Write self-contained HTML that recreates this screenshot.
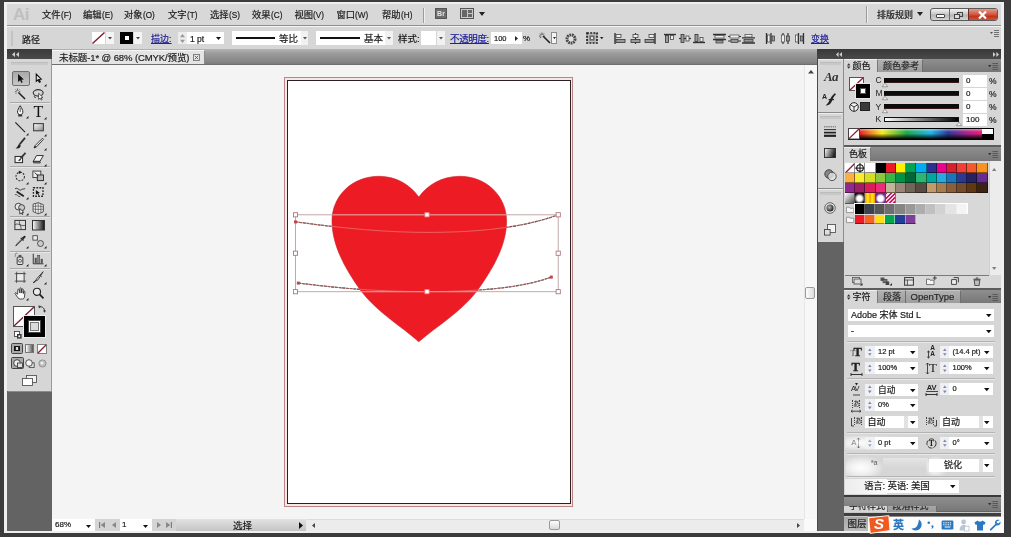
<!DOCTYPE html>
<html lang="zh-CN">
<head>
<meta charset="utf-8">
<title>未标题-1* @ 68% (CMYK/预览)</title>
<style>
*{box-sizing:border-box;margin:0;padding:0}
html,body{width:1011px;height:537px;overflow:hidden;background:#3c3c3c}
body{position:relative;font-family:"Liberation Sans","Noto Sans CJK SC",sans-serif;font-size:10px;color:#1a1a1a;line-height:1}
#root{position:absolute;left:0;top:0;width:1011px;height:537px;will-change:transform}
.a{position:absolute}
.t{white-space:nowrap;line-height:12px;height:12px;-webkit-text-stroke:0.2px}
.blue{color:#22229a;text-decoration:underline}
.wf{background:#fff}
svg{display:block;overflow:visible}
</style>
</head>
<body>
<div id="root">
<div class="a " style="left:4px;top:2px;width:1000px;height:530.6px;background:#efefef"></div>
<div class="a " style="left:7px;top:4px;width:994px;height:527px;background:#d6d6d6"></div>
<div class="a " style="left:7px;top:4px;width:994px;height:22px;background:#d8d8d8"></div>
<div class="a " style="left:7px;top:25px;width:994px;height:1px;background:#8f8f8f"></div>
<div class="a " style="left:7px;top:26px;width:994px;height:1px;background:#f4f4f4"></div>
<div class="a t " style="left:13px;top:5.5px;font-size:17px;font-weight:bold;color:#c0c0c0;line-height:18px;height:18px;letter-spacing:-0.5px">Ai</div>
<div class="a t " style="left:42px;top:9.3px;font-size:9.3px;color:#202020">文件<span style="display:inline-block;transform:scaleX(.88);transform-origin:0 50%">(F)</span></div>
<div class="a t " style="left:83px;top:9.3px;font-size:9.3px;color:#202020">编辑<span style="display:inline-block;transform:scaleX(.88);transform-origin:0 50%">(E)</span></div>
<div class="a t " style="left:124px;top:9.3px;font-size:9.3px;color:#202020">对象<span style="display:inline-block;transform:scaleX(.88);transform-origin:0 50%">(O)</span></div>
<div class="a t " style="left:168px;top:9.3px;font-size:9.3px;color:#202020">文字<span style="display:inline-block;transform:scaleX(.88);transform-origin:0 50%">(T)</span></div>
<div class="a t " style="left:210px;top:9.3px;font-size:9.3px;color:#202020">选择<span style="display:inline-block;transform:scaleX(.88);transform-origin:0 50%">(S)</span></div>
<div class="a t " style="left:252px;top:9.3px;font-size:9.3px;color:#202020">效果<span style="display:inline-block;transform:scaleX(.88);transform-origin:0 50%">(C)</span></div>
<div class="a t " style="left:294.5px;top:9.3px;font-size:9.3px;color:#202020">视图<span style="display:inline-block;transform:scaleX(.88);transform-origin:0 50%">(V)</span></div>
<div class="a t " style="left:336.5px;top:9.3px;font-size:9.3px;color:#202020">窗口<span style="display:inline-block;transform:scaleX(.88);transform-origin:0 50%">(W)</span></div>
<div class="a t " style="left:382px;top:9.3px;font-size:9.3px;color:#202020">帮助<span style="display:inline-block;transform:scaleX(.88);transform-origin:0 50%">(H)</span></div>
<div class="a " style="left:423px;top:8px;width:1px;height:15px;background:#9c9c9c"></div>
<div class="a " style="left:424px;top:8px;width:1px;height:15px;background:#efefef"></div>
<div class="a " style="left:435px;top:8px;width:12px;height:11px;background:#6e6e6e;border:1px solid #555;color:#e4e4e4;font-size:7px;font-weight:bold;line-height:9px;text-align:center">Br</div>
<svg class="a" style="left:460px;top:8px;" width="14" height="11" viewBox="0 0 14 11"><rect x="0.5" y="0.5" width="13" height="10" fill="#c9c9c9" stroke="#555"/><rect x="2" y="2" width="5" height="7" fill="#666"/><rect x="8" y="2" width="4" height="3" fill="#666"/><rect x="8" y="6" width="4" height="3" fill="#666"/></svg>
<svg class="a" style="left:479px;top:12px;" width="6" height="4" viewBox="0 0 6 4"><path d="M0 0H6L3.0 4Z" fill="#222"/></svg>
<div class="a " style="left:866px;top:6px;width:1px;height:17px;background:#9c9c9c"></div>
<div class="a " style="left:867px;top:6px;width:1px;height:17px;background:#efefef"></div>
<div class="a t " style="left:877px;top:9px;font-size:9px;color:#202020">排版规则</div>
<svg class="a" style="left:917px;top:12px;" width="6" height="4" viewBox="0 0 6 4"><path d="M0 0H6L3.0 4Z" fill="#222"/></svg>
<div class="a" style="left:930px;top:8px;width:68px;height:13px;border:1px solid #5a5a5a;border-radius:3px;background:linear-gradient(#f3f3f3,#c9c9c9 45%,#b5b5b5 55%,#d6d6d6);overflow:hidden">
<div class="a" style="left:18px;top:0;width:1px;height:13px;background:#6b6b6b"></div>
<div class="a" style="left:37px;top:0;width:30px;height:13px;background:linear-gradient(#e39a8a,#d2513a 45%,#c0321c 55%,#d7654f);border-left:1px solid #6b2a20"></div>
<div class="a" style="left:4.5px;top:5px;width:9px;height:4px;border:1px solid #444;background:#fff;border-radius:1px"></div>
<div class="a" style="left:26px;top:3px;width:6px;height:5px;border:1px solid #444"></div>
<div class="a" style="left:23px;top:5px;width:6px;height:5px;border:1px solid #444;background:#ddd"></div>
<svg class="a" style="left:47px;top:2px" width="9" height="8" viewBox="0 0 9 8"><path d="M1 0.5L8 7.5M8 0.5L1 7.5" stroke="#fff" stroke-width="2.2"/></svg>
</div>
<div class="a " style="left:11px;top:31px;width:2px;height:15px;background:#c3c3c3"></div>
<div class="a t " style="left:22px;top:33.5px;font-size:9px">路径</div>
<svg class="a" style="left:92px;top:32px;" width="13" height="12" viewBox="0 0 13 12"><rect width="13" height="12" fill="#fff"/><path d="M0.5 11.5L12.5 0.5" stroke="#7a1c2c" stroke-width="1.4"/></svg>
<div class="a " style="left:106px;top:32px;width:8px;height:12px;background:#f4f4f4"></div>
<svg class="a" style="left:108px;top:37px;" width="4" height="2.5" viewBox="0 0 4 2.5"><path d="M0 0H4L2.0 2.5Z" fill="#444"/></svg>
<div class="a " style="left:120px;top:32px;width:13px;height:12px;background:#000"></div>
<div class="a " style="left:125px;top:36px;width:4px;height:4px;background:#fff"></div>
<div class="a " style="left:134px;top:32px;width:8px;height:12px;background:#f4f4f4"></div>
<svg class="a" style="left:136px;top:37px;" width="4" height="2.5" viewBox="0 0 4 2.5"><path d="M0 0H4L2.0 2.5Z" fill="#444"/></svg>
<div class="a t blue" style="left:151px;top:33.3px;font-size:9px">描边:</div>
<div class="a " style="left:178px;top:32px;width:46px;height:12px;background:#fff"></div>
<div class="a " style="left:178px;top:32px;width:9px;height:12px;background:#ececec"></div>
<svg class="a" style="left:180px;top:33.5px;" width="5" height="9" viewBox="0 0 5 9"><path d="M0 3.2L2.5 0L5 3.2Z M0 5.8L2.5 9L5 5.8Z" fill="#999"/></svg>
<div class="a t " style="left:190px;top:33px;font-size:8.5px">1 pt</div>
<svg class="a" style="left:216px;top:37px;" width="5" height="3" viewBox="0 0 5 3"><path d="M0 0H5L2.5 3Z" fill="#111"/></svg>
<div class="a " style="left:232px;top:31px;width:69px;height:14px;background:#fff"></div>
<div class="a " style="left:236px;top:37px;width:39px;height:2px;background:#111"></div>
<div class="a t " style="left:279px;top:33px;font-size:9.5px">等比</div>
<div class="a " style="left:301px;top:31px;width:7px;height:14px;background:#f1f1f1"></div>
<svg class="a" style="left:302.5px;top:37px;" width="4" height="2.5" viewBox="0 0 4 2.5"><path d="M0 0H4L2.0 2.5Z" fill="#555"/></svg>
<div class="a " style="left:316px;top:31px;width:69px;height:14px;background:#fff"></div>
<div class="a " style="left:320px;top:37px;width:40px;height:2px;background:#111"></div>
<div class="a t " style="left:364px;top:33px;font-size:9.5px">基本</div>
<div class="a " style="left:385px;top:31px;width:8px;height:14px;background:#f1f1f1"></div>
<svg class="a" style="left:387px;top:37px;" width="4" height="2.5" viewBox="0 0 4 2.5"><path d="M0 0H4L2.0 2.5Z" fill="#555"/></svg>
<div class="a t " style="left:398px;top:33px;font-size:9.5px">样式:</div>
<div class="a " style="left:421px;top:31px;width:15px;height:14px;background:#fff"></div>
<div class="a " style="left:437px;top:31px;width:8px;height:14px;background:#f1f1f1"></div>
<svg class="a" style="left:439px;top:37px;" width="4" height="2.5" viewBox="0 0 4 2.5"><path d="M0 0H4L2.0 2.5Z" fill="#555"/></svg>
<div class="a t blue" style="left:450px;top:33px;font-size:9.5px;letter-spacing:-0.35px">不透明度:</div>
<div class="a " style="left:491px;top:32px;width:31px;height:12px;background:#fff"></div>
<div class="a t " style="left:494px;top:33px;font-size:7.5px">100</div>
<svg class="a" style="left:515px;top:35.5px;" width="3" height="5" viewBox="0 0 3 5"><path d="M0 0L3 2.5L0 5Z" fill="#222"/></svg>
<div class="a t " style="left:523px;top:33px;font-size:8px">%</div>
<svg class="a" style="left:538px;top:32px;" width="13" height="12" viewBox="0 0 13 12"><path d="M5 4L12 11" stroke="#222" stroke-width="1.6"/><path d="M4 0.5V3M1 4H3.2M5.8 4H7M2 1.5L3.2 2.8M6 1.5L5 2.8M2 6.2L3.2 5" stroke="#444" stroke-width="0.9"/></svg>
<div class="a " style="left:551px;top:32px;width:6px;height:12px;background:#f4f4f4;border:1px solid #8c8c8c"></div>
<svg class="a" style="left:552.5px;top:37px;" width="3" height="2" viewBox="0 0 3 2"><path d="M0 0H3L1.5 2Z" fill="#222"/></svg>
<svg class="a" style="left:565px;top:33px;" width="12" height="12" viewBox="0 0 12 12"><circle cx="6" cy="6" r="4" fill="none" stroke="#4a4a4a" stroke-width="3" stroke-dasharray="1.7 0.7"/><circle cx="6" cy="6" r="2.4" fill="#e0e0e0"/></svg>
<svg class="a" style="left:586px;top:32px;" width="12" height="12" viewBox="0 0 12 12"><rect x="1" y="1" width="10" height="10" fill="#b9b9b9" stroke="#222" stroke-width="1.7" stroke-dasharray="2 1.2"/><rect x="3.4" y="3.4" width="5.2" height="5.2" fill="#6a6a6a"/><rect x="5" y="5" width="2" height="2" fill="#e6e6e6"/></svg>
<svg class="a" style="left:599.5px;top:37px;" width="3.5" height="2.2" viewBox="0 0 3.5 2.2"><path d="M0 0H3.5L1.75 2.2Z" fill="#222"/></svg>
<svg class="a" style="left:614px;top:33px;" width="13" height="11" viewBox="0 0 13 11"><path d="M1 0V11" stroke="#333" stroke-width="1.4"/><rect x="2" y="1.5" width="5" height="3" fill="#efefef" stroke="#444" stroke-width="0.8"/><rect x="2" y="6.5" width="9" height="3" fill="#999" stroke="#333" stroke-width="0.8"/></svg>
<svg class="a" style="left:629.5px;top:33px;" width="13" height="11" viewBox="0 0 13 11"><path d="M5.5 0V11" stroke="#333" stroke-width="1.2"/><rect x="3" y="1.5" width="5" height="3" fill="#efefef" stroke="#444" stroke-width="0.8"/><rect x="1" y="6.5" width="9" height="3" fill="#999" stroke="#333" stroke-width="0.8"/></svg>
<svg class="a" style="left:644px;top:33px;" width="13" height="11" viewBox="0 0 13 11"><path d="M11 0V11" stroke="#333" stroke-width="1.4"/><rect x="5" y="1.5" width="5" height="3" fill="#efefef" stroke="#444" stroke-width="0.8"/><rect x="1" y="6.5" width="9" height="3" fill="#999" stroke="#333" stroke-width="0.8"/></svg>
<svg class="a" style="left:664px;top:33px;" width="13" height="11" viewBox="0 0 13 11"><path d="M0 1.5H12" stroke="#333" stroke-width="1.4"/><rect x="1.5" y="2.5" width="3" height="7" fill="#999" stroke="#333" stroke-width="0.8"/><rect x="6.5" y="2.5" width="3" height="4" fill="#efefef" stroke="#444" stroke-width="0.8"/></svg>
<svg class="a" style="left:679px;top:33px;" width="13" height="11" viewBox="0 0 13 11"><path d="M0 5.5H12" stroke="#333" stroke-width="1.2"/><rect x="2" y="1.5" width="3" height="8" fill="#999" stroke="#333" stroke-width="0.8"/><rect x="7" y="3" width="3" height="5" fill="#efefef" stroke="#444" stroke-width="0.8"/></svg>
<svg class="a" style="left:693px;top:33px;" width="13" height="11" viewBox="0 0 13 11"><path d="M0 9.5H12" stroke="#333" stroke-width="1.4"/><rect x="2" y="1.5" width="3" height="7" fill="#999" stroke="#333" stroke-width="0.8"/><rect x="7" y="4.5" width="3" height="4" fill="#efefef" stroke="#444" stroke-width="0.8"/></svg>
<svg class="a" style="left:713px;top:33px;" width="13" height="11" viewBox="0 0 13 11"><path d="M0 1.5H13M0 6.5H13" stroke="#333" stroke-width="1.3"/><rect x="2" y="2.5" width="9" height="2.5" fill="#efefef" stroke="#444" stroke-width="0.7"/><rect x="3" y="7.5" width="7" height="2.5" fill="#999" stroke="#333" stroke-width="0.7"/></svg>
<svg class="a" style="left:728px;top:33px;" width="13" height="11" viewBox="0 0 13 11"><path d="M0 3.5H13M0 8H13" stroke="#333" stroke-width="1.2"/><rect x="2" y="2" width="9" height="3" fill="#efefef" stroke="#444" stroke-width="0.7"/><rect x="3" y="6.5" width="7" height="3" fill="#999" stroke="#333" stroke-width="0.7"/></svg>
<svg class="a" style="left:742px;top:33px;" width="13" height="11" viewBox="0 0 13 11"><path d="M0 4.8H13M0 10H13" stroke="#333" stroke-width="1.3"/><rect x="3" y="1.5" width="7" height="2.5" fill="#efefef" stroke="#444" stroke-width="0.7"/><rect x="2" y="6.5" width="9" height="2.5" fill="#999" stroke="#333" stroke-width="0.7"/></svg>
<svg class="a" style="left:764.5px;top:33px;" width="13" height="11" viewBox="0 0 13 11"><path d="M1.5 0V11M6 0V11" stroke="#333" stroke-width="1.3"/><rect x="2.5" y="2" width="2.5" height="7" fill="#efefef" stroke="#444" stroke-width="0.7"/><rect x="7" y="3" width="2.5" height="5" fill="#999" stroke="#333" stroke-width="0.7"/></svg>
<svg class="a" style="left:779.5px;top:33px;" width="13" height="11" viewBox="0 0 13 11"><path d="M3 0V11M8 0V11" stroke="#333" stroke-width="1.2"/><rect x="1.5" y="2" width="3" height="7" fill="#efefef" stroke="#444" stroke-width="0.7"/><rect x="6.5" y="3" width="3" height="5" fill="#999" stroke="#333" stroke-width="0.7"/></svg>
<svg class="a" style="left:794px;top:33px;" width="13" height="11" viewBox="0 0 13 11"><path d="M4.5 0V11M9.5 0V11" stroke="#333" stroke-width="1.3"/><rect x="1.5" y="2" width="2.5" height="7" fill="#efefef" stroke="#444" stroke-width="0.7"/><rect x="6.5" y="3" width="2.5" height="5" fill="#999" stroke="#333" stroke-width="0.7"/></svg>
<div class="a t blue" style="left:811px;top:33px;font-size:9px">变换</div>
<svg class="a" style="left:990px;top:30px;" width="9" height="7" viewBox="0 0 9 7"><path d="M0 2H3L1.5 4Z" fill="#555"/><path d="M4 0.5H9M4 2.5H9M4 4.5H9M4 6.5H9" stroke="#666" stroke-width="0.9"/></svg>
<div class="a " style="left:52px;top:49px;width:765px;height:16px;background:linear-gradient(#b4b4b4,#9a9a9a 30%,#868686 80%,#777)"></div>
<div class="a " style="left:52px;top:50px;width:153px;height:15px;background:#e4e4e4;border-right:1px solid #8a8a8a;border-top:1px solid #f6f6f6"></div>
<div class="a t " style="left:59px;top:52px;font-size:9.5px;color:#222;letter-spacing:-0.1px">未标题-1* @ 68% (CMYK/预览)</div>
<svg class="a" style="left:193px;top:54px;" width="7" height="7" viewBox="0 0 7 7"><rect x="0.5" y="0.5" width="6" height="6" fill="#e9e9e9" stroke="#777" stroke-width="0.9"/><path d="M1.8 1.8L5.2 5.2M5.2 1.8L1.8 5.2" stroke="#555" stroke-width="0.9"/></svg>
<div class="a " style="left:7px;top:49px;width:45px;height:10px;background:linear-gradient(#3a3a3a,#4a4a4a)"></div>
<svg class="a" style="left:12px;top:52px;" width="7" height="5" viewBox="0 0 7 5"><path d="M3 0L0 2.5L3 5ZM7 0L4 2.5L7 5Z" fill="#cfcfcf"/></svg>
<div class="a " style="left:8px;top:59px;width:43px;height:332px;background:#d6d6d6"></div>
<div class="a " style="left:51px;top:59px;width:1px;height:332px;background:#9a9a9a"></div>
<div class="a " style="left:11px;top:62px;width:37px;height:3px;background:#c9c9c9;border-top:1px solid #bdbdbd"></div>
<div class="a " style="left:7px;top:391px;width:45px;height:140px;background:#636363"></div>
<div class="a " style="left:8px;top:391px;width:44px;height:1px;background:#8a8a8a"></div>
<div class="a " style="left:10px;top:102px;width:40px;height:1px;background:#a9a9a9"></div>
<div class="a " style="left:10px;top:103px;width:40px;height:1px;background:#e6e6e6"></div>
<div class="a " style="left:10px;top:165.5px;width:40px;height:1px;background:#a9a9a9"></div>
<div class="a " style="left:10px;top:166.5px;width:40px;height:1px;background:#e6e6e6"></div>
<div class="a " style="left:10px;top:215.5px;width:40px;height:1px;background:#a9a9a9"></div>
<div class="a " style="left:10px;top:216.5px;width:40px;height:1px;background:#e6e6e6"></div>
<div class="a " style="left:10px;top:250.5px;width:40px;height:1px;background:#a9a9a9"></div>
<div class="a " style="left:10px;top:251.5px;width:40px;height:1px;background:#e6e6e6"></div>
<div class="a " style="left:10px;top:268px;width:40px;height:1px;background:#a9a9a9"></div>
<div class="a " style="left:10px;top:269px;width:40px;height:1px;background:#e6e6e6"></div>
<div class="a " style="left:11.5px;top:71px;width:18px;height:15px;background:linear-gradient(#a9a9a9,#c6c6c6);border:1px solid #6f6f6f;border-radius:2px"></div>
<svg class="a" style="left:14.3px;top:72.3px;" width="12.4" height="12.4" viewBox="0 0 14 14"><path d="M4.6 2.2L4.6 11.4L6.9 9.3L8.4 12.3L9.8 11.6L8.3 8.8L11.1 8.6Z" fill="#111"/></svg>
<svg class="a" style="left:32.3px;top:72.3px;" width="12.4" height="12.4" viewBox="0 0 14 14"><path d="M4.8 2.4L4.8 10.6L6.8 8.8L8.2 11.6L9.4 11L8 8.3L10.4 8.1Z" fill="#e8e8e8" stroke="#111" stroke-width="1.2"/></svg>
<svg class="a" style="left:44.1px;top:83.9px;" width="2.5" height="2.5" viewBox="0 0 2.5 2.5"><path d="M2.5 0V2.5H0Z" fill="#222"/></svg>
<svg class="a" style="left:14.3px;top:88.3px;" width="12.4" height="12.4" viewBox="0 0 14 14"><path d="M5 5L12.5 12.5" stroke="#222" stroke-width="1.7"/><path d="M4 0.5V3M1 4.2H3M5.5 4.2H7.2M1.8 1.8L3 3M6.2 1.8L5.2 3M2 6.5L3 5.4" stroke="#444" stroke-width="0.9"/></svg>
<svg class="a" style="left:32.3px;top:88.3px;" width="12.4" height="12.4" viewBox="0 0 14 14"><ellipse cx="7" cy="5.5" rx="5.6" ry="3.6" fill="none" stroke="#333" stroke-width="1.3"/><path d="M3 8.5C2 10 3 11.5 4.5 10.5" fill="none" stroke="#333" stroke-width="1"/><path d="M7.5 6L7.5 13L9.2 11.4L10.4 13.6L11.4 13L10.3 11L12.4 10.8Z" fill="#fff" stroke="#222" stroke-width="0.8"/></svg>
<svg class="a" style="left:14.3px;top:104.8px;" width="12.4" height="12.4" viewBox="0 0 14 14"><path d="M7 0.8C5.4 3.5 4 5.5 4 8.2L5.4 11H8.6L10 8.2C10 5.5 8.6 3.5 7 0.8Z" fill="#fff" stroke="#222" stroke-width="1.1"/><path d="M7 3V8" stroke="#222" stroke-width="0.9"/><rect x="4.8" y="11.2" width="4.4" height="1.8" fill="#333"/></svg>
<svg class="a" style="left:26.1px;top:116.4px;" width="2.5" height="2.5" viewBox="0 0 2.5 2.5"><path d="M2.5 0V2.5H0Z" fill="#222"/></svg>
<div class="a" style="left:30.5px;top:103.5px;width:16px;height:16px;font-family:'Liberation Serif',serif;font-size:16px;line-height:16px;text-align:center;color:#111">T</div>
<svg class="a" style="left:44px;top:117px;" width="2.5" height="2.5" viewBox="0 0 2.5 2.5"><path d="M2.5 0V2.5H0Z" fill="#222"/></svg>
<svg class="a" style="left:14.3px;top:121.3px;" width="12.4" height="12.4" viewBox="0 0 14 14"><path d="M1.5 1.5L12.5 12.5" stroke="#222" stroke-width="1.3"/></svg>
<svg class="a" style="left:26.1px;top:132.9px;" width="2.5" height="2.5" viewBox="0 0 2.5 2.5"><path d="M2.5 0V2.5H0Z" fill="#222"/></svg>
<svg class="a" style="left:33px;top:123.2px;" width="11" height="8.4" viewBox="0 0 11 8.4"><defs><linearGradient id="rg" x1="0" y1="0" x2="1" y2="1"><stop offset="0" stop-color="#fff"/><stop offset="1" stop-color="#8a8a8a"/></linearGradient></defs><rect x="0.6" y="0.6" width="9.8" height="7.2" fill="url(#rg)" stroke="#444" stroke-width="1.1"/></svg>
<svg class="a" style="left:44px;top:133.5px;" width="2.5" height="2.5" viewBox="0 0 2.5 2.5"><path d="M2.5 0V2.5H0Z" fill="#222"/></svg>
<svg class="a" style="left:14.3px;top:136.8px;" width="12.4" height="12.4" viewBox="0 0 14 14"><path d="M12.5 1L6.5 8" stroke="#333" stroke-width="2"/><path d="M6.5 8C5 8.2 4.6 9.8 3.6 11.2C2.9 12.2 1.8 12.6 1.5 12.6C3.6 13.4 6 12.8 6.9 11.6C7.7 10.5 7.6 9 6.5 8Z" fill="#222"/></svg>
<svg class="a" style="left:32.3px;top:136.8px;" width="12.4" height="12.4" viewBox="0 0 14 14"><path d="M11.8 1.4L13 2.6L5 11.2L2.4 12.4L3.4 9.8Z" fill="#eee" stroke="#222" stroke-width="1"/><path d="M2.4 12.4L3.4 9.8L5 11.2Z" fill="#222"/></svg>
<svg class="a" style="left:44.1px;top:148.4px;" width="2.5" height="2.5" viewBox="0 0 2.5 2.5"><path d="M2.5 0V2.5H0Z" fill="#222"/></svg>
<svg class="a" style="left:14.3px;top:152.3px;" width="12.4" height="12.4" viewBox="0 0 14 14"><rect x="1.2" y="5" width="8.5" height="7" fill="#f2f2f2" stroke="#222" stroke-width="1.1"/><path d="M13 1L7.4 7.2" stroke="#333" stroke-width="1.9"/><path d="M7.5 7C6 7.3 6 8.8 4.6 10C6.4 10.6 8.6 9.3 7.5 7Z" fill="#222"/></svg>
<svg class="a" style="left:32.3px;top:152.3px;" width="12.4" height="12.4" viewBox="0 0 14 14"><path d="M5.2 4L12.8 4L9 10.6H1.4Z" fill="#f4f4f4" stroke="#222" stroke-width="1"/><path d="M1.4 10.6H9L9.4 12.4H1.8Z" fill="#888" stroke="#222" stroke-width="0.8"/></svg>
<svg class="a" style="left:44.1px;top:163.9px;" width="2.5" height="2.5" viewBox="0 0 2.5 2.5"><path d="M2.5 0V2.5H0Z" fill="#222"/></svg>
<svg class="a" style="left:14.3px;top:170.3px;" width="12.4" height="12.4" viewBox="0 0 14 14"><circle cx="7" cy="7.4" r="4.8" fill="none" stroke="#333" stroke-width="1.2" stroke-dasharray="2.2 1.4"/><path d="M5.5 0.6L9 2.5L5.6 4.6Z" fill="#222"/></svg>
<svg class="a" style="left:26.1px;top:181.9px;" width="2.5" height="2.5" viewBox="0 0 2.5 2.5"><path d="M2.5 0V2.5H0Z" fill="#222"/></svg>
<svg class="a" style="left:32.3px;top:170.3px;" width="12.4" height="12.4" viewBox="0 0 14 14"><rect x="1" y="1.2" width="9" height="7.4" fill="#eee" stroke="#333" stroke-width="1"/><rect x="6" y="5.6" width="7" height="6.4" fill="#bbb" stroke="#222" stroke-width="1"/><path d="M3 3L7 6.6" stroke="#222" stroke-width="1"/></svg>
<svg class="a" style="left:44.1px;top:181.9px;" width="2.5" height="2.5" viewBox="0 0 2.5 2.5"><path d="M2.5 0V2.5H0Z" fill="#222"/></svg>
<svg class="a" style="left:14.3px;top:185.8px;" width="12.4" height="12.4" viewBox="0 0 14 14"><path d="M1.2 3.2C4 0.8 6 6.2 8.4 4.2C10 2.8 11 4 12.6 2.8" fill="none" stroke="#333" stroke-width="1.1"/><path d="M3 6.2L11 11.6" stroke="#222" stroke-width="2"/><path d="M1 9.8C3.4 8.6 4.4 12.6 7 12" fill="none" stroke="#444" stroke-width="1"/></svg>
<svg class="a" style="left:26.1px;top:197.4px;" width="2.5" height="2.5" viewBox="0 0 2.5 2.5"><path d="M2.5 0V2.5H0Z" fill="#222"/></svg>
<svg class="a" style="left:32.3px;top:185.8px;" width="12.4" height="12.4" viewBox="0 0 14 14"><rect x="1.6" y="2" width="10.8" height="9.6" fill="none" stroke="#222" stroke-width="1.5" stroke-dasharray="2 1.4"/><path d="M4.4 4.4L4.4 10L6 8.6L7 10.8L8 10.3L7 8.2L9 8Z" fill="#111"/></svg>
<svg class="a" style="left:14.3px;top:201.8px;" width="12.4" height="12.4" viewBox="0 0 14 14"><circle cx="5" cy="5.2" r="3.8" fill="#e9e9e9" stroke="#333" stroke-width="1"/><circle cx="8.6" cy="6.4" r="3.4" fill="#c9c9c9" stroke="#333" stroke-width="1"/><path d="M6.5 7.4L6.5 13.6L8.1 12.2L9.2 14.2L10.1 13.7L9.1 11.8L11 11.6Z" fill="#fff" stroke="#111" stroke-width="0.8"/></svg>
<svg class="a" style="left:26.1px;top:213.4px;" width="2.5" height="2.5" viewBox="0 0 2.5 2.5"><path d="M2.5 0V2.5H0Z" fill="#222"/></svg>
<svg class="a" style="left:32.3px;top:201.8px;" width="12.4" height="12.4" viewBox="0 0 14 14"><path d="M1.2 2.4L7 0.8L12.8 3V11L7 13.4L1.2 10.8Z" fill="#ededed" stroke="#333" stroke-width="0.9"/><path d="M7 0.8V13.4M1.2 5.2L7 4.4L12.8 5.6M1.2 8L7 8.4L12.8 8.2M4 1.7V12.1M10 1.9V12.2" stroke="#444" stroke-width="0.7" fill="none"/></svg>
<svg class="a" style="left:44.1px;top:213.4px;" width="2.5" height="2.5" viewBox="0 0 2.5 2.5"><path d="M2.5 0V2.5H0Z" fill="#222"/></svg>
<svg class="a" style="left:14.3px;top:219.3px;" width="12.4" height="12.4" viewBox="0 0 14 14"><rect x="1" y="1.6" width="12" height="10.4" fill="#dcdcdc" stroke="#333" stroke-width="1.1"/><path d="M1 6.4C5 3.8 9 9.4 13 6.8M6.6 1.6C4.4 5 9.6 8.6 7.4 12" fill="none" stroke="#333" stroke-width="0.9"/></svg>
<svg class="a" style="left:31.5px;top:220px;" width="13" height="10.5" viewBox="0 0 13 10.5"><defs><linearGradient id="gg" x1="0" y1="0" x2="1" y2="0"><stop offset="0" stop-color="#fff"/><stop offset="1" stop-color="#111"/></linearGradient></defs><rect x="0.5" y="0.5" width="12" height="9.5" fill="url(#gg)" stroke="#333" stroke-width="1"/></svg>
<svg class="a" style="left:14.3px;top:234.8px;" width="12.4" height="12.4" viewBox="0 0 14 14"><path d="M11.4 1C12.6 0.4 13.6 1.6 12.8 2.8L10.6 5L8.8 3.2Z" fill="#222"/><path d="M9.2 4L3 10.4L2 12.2L3.6 11.2L10 4.8" fill="#eee" stroke="#222" stroke-width="0.9"/><path d="M7.6 3.2L10.8 6.2" stroke="#222" stroke-width="1.4"/></svg>
<svg class="a" style="left:26.1px;top:246.4px;" width="2.5" height="2.5" viewBox="0 0 2.5 2.5"><path d="M2.5 0V2.5H0Z" fill="#222"/></svg>
<svg class="a" style="left:32.3px;top:234.8px;" width="12.4" height="12.4" viewBox="0 0 14 14"><rect x="1" y="0.8" width="5" height="5" fill="#eee" stroke="#333" stroke-width="0.9"/><circle cx="9.6" cy="9.6" r="3.4" fill="#ccc" stroke="#333" stroke-width="0.9"/><path d="M5.4 5.4L7.4 7.4" stroke="#555" stroke-width="0.8" stroke-dasharray="1 0.8"/></svg>
<svg class="a" style="left:44.1px;top:246.4px;" width="2.5" height="2.5" viewBox="0 0 2.5 2.5"><path d="M2.5 0V2.5H0Z" fill="#222"/></svg>
<svg class="a" style="left:14.3px;top:252.8px;" width="12.4" height="12.4" viewBox="0 0 14 14"><rect x="3.6" y="4.6" width="6.4" height="8.4" rx="1" fill="#e4e4e4" stroke="#222" stroke-width="1"/><rect x="5.2" y="2.2" width="3.2" height="2.4" fill="#555"/><circle cx="6.8" cy="8.8" r="1.7" fill="none" stroke="#333" stroke-width="0.8"/><path d="M1 1.2H2.2M0.8 3.4H2M2.6 0.2H3.6" stroke="#333" stroke-width="0.9"/></svg>
<svg class="a" style="left:26.1px;top:264.4px;" width="2.5" height="2.5" viewBox="0 0 2.5 2.5"><path d="M2.5 0V2.5H0Z" fill="#222"/></svg>
<svg class="a" style="left:32.3px;top:252.8px;" width="12.4" height="12.4" viewBox="0 0 14 14"><path d="M1.4 0.8V12.2H13" fill="none" stroke="#222" stroke-width="1"/><rect x="3" y="5.4" width="2.4" height="6.4" fill="#555"/><rect x="6.4" y="2.6" width="2.4" height="9.2" fill="#888" stroke="#333" stroke-width="0.5"/><rect x="9.8" y="6.6" width="2.4" height="5.2" fill="#555"/></svg>
<svg class="a" style="left:44.1px;top:264.4px;" width="2.5" height="2.5" viewBox="0 0 2.5 2.5"><path d="M2.5 0V2.5H0Z" fill="#222"/></svg>
<svg class="a" style="left:14.3px;top:270.8px;" width="12.4" height="12.4" viewBox="0 0 14 14"><rect x="3" y="3" width="8.4" height="8.4" fill="#ececec" stroke="#333" stroke-width="1"/><path d="M3 0.8V3M0.8 3H3M11.4 11.4V13.6M11.4 11.4H13.6M11.4 0.8V3M13.6 3H11.4M3 13.6V11.4M0.8 11.4H3" stroke="#333" stroke-width="0.8"/></svg>
<svg class="a" style="left:32.3px;top:270.8px;" width="12.4" height="12.4" viewBox="0 0 14 14"><path d="M12.6 0.8L5.4 8.6L3.6 11.6L6.8 10Z" fill="#ddd" stroke="#222" stroke-width="0.9"/><path d="M3.6 11.6L1.4 13.4" stroke="#222" stroke-width="1.2"/><path d="M9 4.8L11 6.6" stroke="#222" stroke-width="0.8"/></svg>
<svg class="a" style="left:44.1px;top:282.4px;" width="2.5" height="2.5" viewBox="0 0 2.5 2.5"><path d="M2.5 0V2.5H0Z" fill="#222"/></svg>
<svg class="a" style="left:14.3px;top:286.8px;" width="12.4" height="12.4" viewBox="0 0 14 14"><path d="M4 8.2L2.2 6.6C1.4 6 0.8 7 1.4 7.8L4.6 12.4C5.2 13.2 6 13.6 7 13.6H9.4C10.8 13.6 11.6 12.6 11.8 11.4L12.4 5.6C12.4 4.6 11.2 4.6 11 5.4L10.6 7.4L10.4 2.8C10.4 1.8 9 1.8 9 2.8L8.8 6.8L8.2 1.6C8.2 0.6 6.8 0.6 6.8 1.6L6.8 6.8L5.8 2.8C5.6 1.8 4.2 2.2 4.4 3.2Z" fill="#fafafa" stroke="#222" stroke-width="0.9"/></svg>
<svg class="a" style="left:26.1px;top:298.4px;" width="2.5" height="2.5" viewBox="0 0 2.5 2.5"><path d="M2.5 0V2.5H0Z" fill="#222"/></svg>
<svg class="a" style="left:32.3px;top:286.8px;" width="12.4" height="12.4" viewBox="0 0 14 14"><circle cx="5.6" cy="5.4" r="4" fill="#ececec" stroke="#222" stroke-width="1.3"/><path d="M8.6 8.4L13 12.8" stroke="#222" stroke-width="2"/></svg>
<svg class="a" style="left:13px;top:306px;" width="22" height="21" viewBox="0 0 22 21"><rect x="0.5" y="0.5" width="21" height="20" fill="#fff" stroke="#555" stroke-width="1"/><path d="M1 20L21 1" stroke="#7a1c2c" stroke-width="1.3"/></svg>
<div class="a " style="left:24px;top:316px;width:21px;height:21px;background:#000;border:1px solid #000;outline:1px solid #ececec"></div>
<div class="a " style="left:28px;top:320px;width:13px;height:13px;background:#fff;border:1px solid #444"></div>
<div class="a " style="left:30px;top:322px;width:9px;height:9px;background:#dcdcdc;border:1px solid #777"></div>
<svg class="a" style="left:38px;top:305px;" width="8" height="8" viewBox="0 0 8 8"><path d="M1 2.4C3.6 0.8 6.2 2.6 6.6 6" fill="none" stroke="#333" stroke-width="1"/><path d="M0.4 0.6L3 1L1 3.4ZM5 5.4H8L6.6 7.8Z" fill="#333"/></svg>
<svg class="a" style="left:14px;top:331px;" width="8" height="8" viewBox="0 0 8 8"><rect x="0.5" y="0.5" width="5" height="5" fill="#fff" stroke="#333" stroke-width="0.8"/><rect x="3" y="3" width="4.6" height="4.6" fill="#333"/><rect x="4.4" y="4.4" width="1.8" height="1.8" fill="#fff"/></svg>
<div class="a " style="left:11px;top:343px;width:12px;height:11px;background:#a9a9a9;border:1px solid #444;border-radius:1.5px"></div>
<div class="a " style="left:14px;top:346px;width:6px;height:5px;background:#333;border:1px solid #111"></div>
<div class="a " style="left:15.6px;top:347.4px;width:2.6px;height:2.2px;background:#ddd"></div>
<div class="a " style="left:25px;top:344px;width:9px;height:9px;background:linear-gradient(90deg,#fff,#555);border:1px solid #777"></div>
<svg class="a" style="left:37px;top:343.5px;" width="10" height="10" viewBox="0 0 10 10"><rect x="0.5" y="0.5" width="9" height="9" fill="#fff" stroke="#777" stroke-width="0.9"/><path d="M1 9L9 1" stroke="#8a1c30" stroke-width="1.3"/></svg>
<div class="a " style="left:11px;top:357px;width:13px;height:12px;background:#a9a9a9;border:1px solid #444;border-radius:1.5px"></div>
<svg class="a" style="left:12.5px;top:358.5px;" width="10" height="9" viewBox="0 0 10 9"><circle cx="4" cy="4" r="3.3" fill="#efefef" stroke="#333" stroke-width="0.9"/><rect x="4.4" y="4" width="5" height="4.4" fill="#ddd" stroke="#333" stroke-width="0.8"/></svg>
<svg class="a" style="left:25px;top:358.5px;" width="10" height="9" viewBox="0 0 10 9"><rect x="4.2" y="3.8" width="5" height="4.6" fill="#ddd" stroke="#444" stroke-width="0.8"/><circle cx="4" cy="4" r="3.3" fill="#f4f4f4" stroke="#444" stroke-width="0.9"/></svg>
<svg class="a" style="left:38px;top:359px;" width="9" height="9" viewBox="0 0 9 9"><circle cx="4.5" cy="4.5" r="3.6" fill="#bdbdbd" stroke="#888" stroke-width="0.8"/><circle cx="4" cy="4" r="1.6" fill="#eee"/></svg>
<svg class="a" style="left:22px;top:375px;" width="15" height="11" viewBox="0 0 15 11"><rect x="4.5" y="0.5" width="10" height="7" fill="#f2f2f2" stroke="#555" stroke-width="0.9"/><rect x="0.5" y="3.5" width="10" height="7" fill="#fff" stroke="#555" stroke-width="0.9"/></svg>
<div class="a " style="left:52px;top:65px;width:752px;height:455px;background:#f4f4f4"></div>
<div class="a " style="left:52px;top:64px;width:765px;height:1px;background:#6f6f6f"></div>
<div class="a " style="left:284px;top:77px;width:289px;height:430px;background:#f6e6e6;border:1px solid #bb8585"></div>
<div class="a " style="left:287px;top:80px;width:283.5px;height:424px;background:#fff;border:1px solid #2e2020"></div>
<svg class="a" style="left:0;top:0" width="1011" height="537" viewBox="0 0 1011 537">
<path id="c1" d="M295.5 221.8C340 228 385 232.4 427 232.4C470 232.4 520 229 558.2 214.8" fill="none" stroke="#2a1a1a" stroke-width="1.15" stroke-dasharray="3 0.7"/>
<path id="c2" d="M298.2 283C330 287 370 291.6 427 291.6C470 291.6 520 289 551.3 277" fill="none" stroke="#2a1a1a" stroke-width="1.15" stroke-dasharray="3 0.7"/>
<path d="M418.8 197C410 184.5 396 176.3 379 176.3C352 176.3 332 196 332 221C332 246 346 270 361 291C378 313 400 325 418.8 341.8C438 325 460 313 477 291C492 270 506.6 246 506.6 221C506.6 196 486 176.3 460 176.3C442 176.3 428 184.5 418.8 197Z" fill="#ed1c24" stroke="#c8202a" stroke-width="0.6"/>
<g fill="none" stroke="#e58f8f" stroke-width="0.8" opacity="0.75">
<path d="M295.5 221.8C340 228 385 232.4 427 232.4C470 232.4 520 229 558.2 214.8"/>
<path d="M298.2 283C330 287 370 291.6 427 291.6C470 291.6 520 289 551.3 277"/>
</g>
<rect x="295.5" y="214.8" width="262.7" height="76.9" fill="none" stroke="#bba0a0" stroke-width="0.9"/>
<path d="M333 214.8H506M361 291.7H477" stroke="#f58a8a" stroke-width="0.9"/>
<g fill="#fff" stroke="#a86a6a" stroke-width="0.8">
<rect x="293.4" y="212.7" width="4.2" height="4.2"/><rect x="556.1" y="212.7" width="4.2" height="4.2"/>
<rect x="293.4" y="251.1" width="4.2" height="4.2"/><rect x="556.1" y="251.1" width="4.2" height="4.2"/>
<rect x="293.4" y="289.6" width="4.2" height="4.2"/><rect x="556.1" y="289.6" width="4.2" height="4.2"/>
</g>
<g fill="#fff" stroke="#f08080" stroke-width="0.8">
<rect x="424.9" y="212.7" width="4.2" height="4.2"/><rect x="424.9" y="289.6" width="4.2" height="4.2"/>
</g>
<g fill="#b84a4a">
<rect x="294" y="220.4" width="3" height="3"/><rect x="296.8" y="281.6" width="3" height="3"/><rect x="549.8" y="275.6" width="3" height="3"/>
</g>
</svg>
<div class="a " style="left:804px;top:65px;width:13px;height:455px;background:#f7f7f7;border-left:1px solid #e6e6e6"></div>
<svg class="a" style="left:807.5px;top:69.5px;" width="6" height="3.5" viewBox="0 0 6 3.5"><path d="M0 3.5L3 0L6 3.5Z" fill="#444"/></svg>
<div class="a " style="left:805px;top:287px;width:10px;height:12px;background:linear-gradient(90deg,#fdfdfd,#dcdcdc);border:1px solid #9a9a9a;border-radius:2px"></div>
<div class="a " style="left:52px;top:519.2px;width:765px;height:11.8px;background:#e9e9e9"></div>
<div class="a " style="left:52px;top:519.2px;width:43px;height:11.8px;background:#fff"></div>
<div class="a t " style="left:55px;top:519.2px;font-size:8px;height:11px;line-height:11px">68%</div>
<svg class="a" style="left:86px;top:525px;" width="5" height="3" viewBox="0 0 5 3"><path d="M0 0H5L2.5 3Z" fill="#111"/></svg>
<div class="a " style="left:95px;top:519.2px;width:25px;height:11.8px;background:#d4d4d4"></div>
<svg class="a" style="left:99px;top:522px;" width="6" height="6" viewBox="0 0 6 6"><path d="M0.6 0V6" stroke="#777" stroke-width="1.1"/><path d="M6 0L1.6 3L6 6Z" fill="#888"/></svg>
<svg class="a" style="left:112px;top:522px;" width="4" height="6" viewBox="0 0 4 6"><path d="M4 0L0 3L4 6Z" fill="#888"/></svg>
<div class="a " style="left:120px;top:519.2px;width:32px;height:11.8px;background:#fff"></div>
<div class="a t " style="left:122px;top:519.2px;font-size:8px;height:11px;line-height:11px">1</div>
<svg class="a" style="left:143px;top:525px;" width="5" height="3" viewBox="0 0 5 3"><path d="M0 0H5L2.5 3Z" fill="#111"/></svg>
<div class="a " style="left:152px;top:519.2px;width:24px;height:11.8px;background:#d4d4d4"></div>
<svg class="a" style="left:157px;top:522px;" width="4" height="6" viewBox="0 0 4 6"><path d="M0 0L4 3L0 6Z" fill="#888"/></svg>
<svg class="a" style="left:166px;top:522px;" width="6" height="6" viewBox="0 0 6 6"><path d="M5.4 0V6" stroke="#777" stroke-width="1.1"/><path d="M0 0L4.4 3L0 6Z" fill="#888"/></svg>
<div class="a " style="left:176px;top:519.2px;width:130px;height:11.8px;background:linear-gradient(#e2e2e2,#c4c4c4)"></div>
<div class="a t " style="left:233px;top:519.5px;font-size:9.5px">选择</div>
<svg class="a" style="left:299px;top:521.5px;" width="4" height="7" viewBox="0 0 4 7"><path d="M0 0L4 3.5L0 7Z" fill="#111"/></svg>
<div class="a " style="left:307px;top:519.2px;width:497px;height:11.8px;background:#ececec;border-top:1px solid #dcdcdc"></div>
<svg class="a" style="left:312px;top:523px;" width="3" height="5" viewBox="0 0 3 5"><path d="M3 0L0 2.5L3 5Z" fill="#444"/></svg>
<svg class="a" style="left:797px;top:523px;" width="3" height="5" viewBox="0 0 3 5"><path d="M0 0L3 2.5L0 5Z" fill="#444"/></svg>
<div class="a " style="left:549px;top:520px;width:11px;height:10.4px;background:linear-gradient(#fdfdfd,#d9d9d9);border:1px solid #9a9a9a;border-radius:2px"></div>
<div class="a " style="left:804px;top:519.2px;width:13px;height:11.8px;background:#fafafa"></div>
<div class="a " style="left:817px;top:49px;width:184px;height:482px;background:#636363"></div>
<div class="a " style="left:817px;top:49px;width:184px;height:10px;background:linear-gradient(#383838,#4a4a4a)"></div>
<svg class="a" style="left:836px;top:51.5px;" width="6" height="5" viewBox="0 0 6 5"><path d="M2.6 0L0 2.5L2.6 5ZM6 0L3.4 2.5L6 5Z" fill="#cfcfcf"/></svg>
<svg class="a" style="left:993px;top:51.5px;" width="6" height="5" viewBox="0 0 6 5"><path d="M0 0L2.6 2.5L0 5ZM3.4 0L6 2.5L3.4 5Z" fill="#cfcfcf"/></svg>
<div class="a " style="left:1001px;top:4px;width:3px;height:528px;background:#efefef"></div>
<div class="a " style="left:817px;top:59px;width:1px;height:472px;background:#4a4a4a"></div>
<div class="a " style="left:818px;top:59px;width:25px;height:183px;background:#8a8a8a"></div>
<div class="a " style="left:818px;top:59px;width:25px;height:52.6px;background:#d6d6d6;border-top:1px solid #ececec"></div>
<div class="a " style="left:820px;top:62px;width:20.5px;height:3px;background:#c8c8c8;border-top:1px solid #bcbcbc"></div>
<div class="a " style="left:818px;top:112.6px;width:25px;height:75.4px;background:#d6d6d6;border-top:1px solid #ececec"></div>
<div class="a " style="left:820px;top:115.6px;width:20.5px;height:3px;background:#c8c8c8;border-top:1px solid #bcbcbc"></div>
<div class="a " style="left:818px;top:189px;width:25px;height:53px;background:#d6d6d6;border-top:1px solid #ececec"></div>
<div class="a " style="left:820px;top:192px;width:20.5px;height:3px;background:#c8c8c8;border-top:1px solid #bcbcbc"></div>
<div class="a" style="left:820px;top:70px;width:22px;height:14px;font-family:'Liberation Serif',serif;font-style:italic;font-weight:bold;font-size:13px;line-height:14px;text-align:center;color:#333;letter-spacing:-0.5px">Aa</div>
<svg class="a" style="left:823px;top:92px;" width="14" height="15" viewBox="0 0 14 15"><path d="M11.8 1.2C9 3.6 7.6 6 6.4 8.6C5.6 10.4 4.6 12 2.6 13.6C5.6 13.4 7.6 12 8.6 9.8C9.6 7.4 10.4 4.6 13 2.2Z" fill="#222"/><path d="M5.6 7.6H11" stroke="#222" stroke-width="1.2"/></svg>
<div class="a" style="left:822px;top:93px;font-size:7px;font-weight:bold;color:#222;line-height:7px">A</div>
<svg class="a" style="left:824px;top:126px;" width="12" height="11" viewBox="0 0 12 11"><path d="M0 0.8H12" stroke="#444" stroke-width="0.8" stroke-dasharray="1.4 0.8"/><path d="M0 3.6H12" stroke="#333" stroke-width="1.1"/><path d="M0 6.6H12" stroke="#222" stroke-width="1.7"/><path d="M0 9.8H12" stroke="#222" stroke-width="2.2"/></svg>
<svg class="a" style="left:824px;top:148px;" width="12" height="10" viewBox="0 0 12 10"><defs><linearGradient id="g2" x1="0" y1="0" x2="1" y2="0.3"><stop offset="0" stop-color="#fff"/><stop offset="1" stop-color="#222"/></linearGradient></defs><rect x="0.5" y="0.5" width="11" height="9" fill="url(#g2)" stroke="#333" stroke-width="1"/></svg>
<svg class="a" style="left:824px;top:169px;" width="13" height="12" viewBox="0 0 13 12"><circle cx="5" cy="5" r="4.2" fill="#8a8a8a" stroke="#333" stroke-width="0.9"/><circle cx="8" cy="7.4" r="4.2" fill="#e4e4e4" fill-opacity="0.8" stroke="#444" stroke-width="0.9"/></svg>
<svg class="a" style="left:824px;top:202px;" width="12" height="12" viewBox="0 0 12 12"><defs><radialGradient id="rg2" cx="0.4" cy="0.4" r="0.6"><stop offset="0" stop-color="#bbb"/><stop offset="1" stop-color="#222"/></radialGradient></defs><circle cx="6" cy="6" r="5.3" fill="#e8e8e8" stroke="#555" stroke-width="0.9"/><circle cx="6" cy="6" r="3.6" fill="url(#rg2)"/></svg>
<svg class="a" style="left:824px;top:224px;" width="12" height="12" viewBox="0 0 12 12"><rect x="3.5" y="0.5" width="8" height="8" fill="#f2f2f2" stroke="#555" stroke-width="0.9"/><rect x="0.5" y="5.5" width="5.6" height="5.6" fill="#e0e0e0" stroke="#444" stroke-width="0.9"/></svg>
<div class="a " style="left:843px;top:59px;width:1px;height:183px;background:#8c8c8c"></div>
<div class="a " style="left:844px;top:59px;width:157px;height:13px;background:linear-gradient(#8f8f8f,#777)"></div>
<svg class="a" style="left:988px;top:62.5px;" width="10" height="7" viewBox="0 0 10 7"><path d="M0 2H3.4L1.7 4.2Z" fill="#333"/><path d="M4.4 0.5H10M4.4 2.5H10M4.4 4.5H10M4.4 6.5H10" stroke="#555" stroke-width="0.9"/></svg>
<div class="a " style="left:844px;top:59px;width:34px;height:14px;background:#d6d6d6;border-top:1px solid #efefef;border-right:1px solid #7a7a7a"></div>
<svg class="a" style="left:847px;top:63px;" width="3.4" height="6" viewBox="0 0 3.4 6"><path d="M0 2.4L1.7 0.3L3.4 2.4ZM0 3.6L1.7 5.7L3.4 3.6Z" fill="#333"/></svg>
<div class="a t " style="left:852.5px;top:60px;font-size:9px">颜色</div>
<div class="a " style="left:878px;top:59px;width:45px;height:13px;background:linear-gradient(#b1b1b1,#9c9c9c);border-right:1px solid #6e6e6e;border-top:1px solid #c4c4c4"></div>
<div class="a t " style="left:883px;top:60px;font-size:9px;color:#2a2a2a">颜色参考</div>
<div class="a " style="left:844px;top:72px;width:157px;height:73px;background:#d6d6d6"></div>
<svg class="a" style="left:848.5px;top:77px;" width="15" height="14" viewBox="0 0 15 14"><rect x="0.5" y="0.5" width="14" height="13" fill="#fff" stroke="#555" stroke-width="1"/><path d="M1 13L14 1" stroke="#8a1c30" stroke-width="1.3"/></svg>
<div class="a " style="left:855.5px;top:84px;width:14px;height:13.5px;background:#000;outline:1px solid #e6e6e6"></div>
<div class="a " style="left:859.5px;top:88px;width:6px;height:5.5px;background:#fff;border:1px solid #555"></div>
<svg class="a" style="left:848.5px;top:101.5px;" width="10" height="10" viewBox="0 0 10 10"><circle cx="5" cy="5" r="4.3" fill="#f2f2f2" stroke="#222" stroke-width="1"/><path d="M5 5V9.3M5 5L1.4 2.8M5 5L8.6 2.8" stroke="#222" stroke-width="0.9"/></svg>
<div class="a " style="left:860.3px;top:101.5px;width:9.5px;height:9.3px;background:#3a3a3a;border:1px solid #222"></div>
<div class="a t " style="left:875.5px;top:74.3px;font-size:8.5px;color:#222;-webkit-text-stroke:0">C</div>
<div class="a " style="left:884px;top:77.8px;width:75px;height:5.4px;background:#0c0c0c;border-bottom:1px solid #3a1a1a"></div>
<svg class="a" style="left:882px;top:83.1px;" width="6" height="4" viewBox="0 0 6 4"><path d="M3 0.3L5.7 3.7H0.3Z" fill="#f4f4f4" stroke="#666" stroke-width="0.6"/></svg>
<div class="a " style="left:963px;top:74.5px;width:24px;height:12px;background:#fff"></div>
<div class="a t " style="left:966px;top:74.5px;font-size:8px;color:#222">0</div>
<div class="a t " style="left:989px;top:74.5px;font-size:8.5px;color:#222">%</div>
<div class="a t " style="left:875.5px;top:87.3px;font-size:8.5px;color:#222;-webkit-text-stroke:0">M</div>
<div class="a " style="left:884px;top:90.8px;width:75px;height:5.4px;background:#0c0c0c;border-bottom:1px solid #3a1a1a"></div>
<svg class="a" style="left:882px;top:96.1px;" width="6" height="4" viewBox="0 0 6 4"><path d="M3 0.3L5.7 3.7H0.3Z" fill="#f4f4f4" stroke="#666" stroke-width="0.6"/></svg>
<div class="a " style="left:963px;top:87.5px;width:24px;height:12px;background:#fff"></div>
<div class="a t " style="left:966px;top:87.5px;font-size:8px;color:#222">0</div>
<div class="a t " style="left:989px;top:87.5px;font-size:8.5px;color:#222">%</div>
<div class="a t " style="left:875.5px;top:100.5px;font-size:8.5px;color:#222;-webkit-text-stroke:0">Y</div>
<div class="a " style="left:884px;top:104.0px;width:75px;height:5.4px;background:#0c0c0c;border-bottom:1px solid #3a1a1a"></div>
<svg class="a" style="left:882px;top:109.3px;" width="6" height="4" viewBox="0 0 6 4"><path d="M3 0.3L5.7 3.7H0.3Z" fill="#f4f4f4" stroke="#666" stroke-width="0.6"/></svg>
<div class="a " style="left:963px;top:100.7px;width:24px;height:12px;background:#fff"></div>
<div class="a t " style="left:966px;top:100.7px;font-size:8px;color:#222">0</div>
<div class="a t " style="left:989px;top:100.7px;font-size:8.5px;color:#222">%</div>
<div class="a t " style="left:875.5px;top:113.39999999999999px;font-size:8.5px;color:#222;-webkit-text-stroke:0">K</div>
<div class="a " style="left:884px;top:116.89999999999999px;width:75px;height:5.4px;background:linear-gradient(90deg,#fff,#000);border:1px solid #111"></div>
<svg class="a" style="left:955.5px;top:122.19999999999999px;" width="6" height="4" viewBox="0 0 6 4"><path d="M3 0.3L5.7 3.7H0.3Z" fill="#f4f4f4" stroke="#666" stroke-width="0.6"/></svg>
<div class="a " style="left:963px;top:113.6px;width:24px;height:12px;background:#fff"></div>
<div class="a t " style="left:966px;top:113.6px;font-size:8px;color:#222">100</div>
<div class="a t " style="left:989px;top:113.6px;font-size:8.5px;color:#222">%</div>
<div class="a " style="left:847.5px;top:128px;width:146px;height:11.5px;background:#000"></div>
<div class="a " style="left:859.5px;top:128.6px;width:122.5px;height:10.4px;background:linear-gradient(rgba(255,255,255,.45),rgba(255,255,255,0) 30%,rgba(0,0,0,0) 45%,rgba(0,0,0,1) 100%),linear-gradient(90deg,#e8202a,#f7ec1f 18%,#1fa84a 38%,#22b5e6 58%,#2a3a9c 72%,#a0248c 86%,#e8207a 100%)"></div>
<svg class="a" style="left:847.5px;top:128px;" width="12" height="11.5" viewBox="0 0 12 11.5"><rect x="0.5" y="0.5" width="11" height="10.5" fill="#fff" stroke="#444" stroke-width="1"/><path d="M1 10.6L11 1" stroke="#8a1c30" stroke-width="1.3"/></svg>
<div class="a " style="left:982px;top:128.6px;width:11px;height:5.2px;background:#fff"></div>
<div class="a " style="left:844px;top:145px;width:157px;height:2px;background:#5c5c5c"></div>
<div class="a " style="left:844px;top:147px;width:157px;height:13.5px;background:linear-gradient(#8f8f8f,#777)"></div>
<svg class="a" style="left:988px;top:150.5px;" width="10" height="7" viewBox="0 0 10 7"><path d="M0 2H3.4L1.7 4.2Z" fill="#333"/><path d="M4.4 0.5H10M4.4 2.5H10M4.4 4.5H10M4.4 6.5H10" stroke="#555" stroke-width="0.9"/></svg>
<div class="a " style="left:844px;top:147px;width:27px;height:14.5px;background:#d6d6d6;border-top:1px solid #efefef;border-right:1px solid #7a7a7a"></div>
<div class="a t " style="left:849px;top:148px;font-size:9px">色板</div>
<div class="a " style="left:844px;top:160.5px;width:157px;height:127px;background:#d8d8d8"></div>
<div class="a " style="left:988.5px;top:161px;width:12.5px;height:114px;background:#ececec;border-left:1px solid #cfcfcf"></div>
<svg class="a" style="left:992px;top:168px;" width="4.4" height="3" viewBox="0 0 4.4 3"><path d="M0 3L2.2 0L4.4 3Z" fill="#808080"/></svg>
<svg class="a" style="left:992px;top:267.2px;" width="4.4" height="3" viewBox="0 0 4.4 3"><path d="M0 0H4.4L2.2 3Z" fill="#808080"/></svg>
<svg class="a" style="left:845.0px;top:162.5px;" width="10.19" height="10.3" viewBox="0 0 10.19 10.3"><rect width="10.19" height="10.3" fill="#fff"/><path d="M0.5 9.8L9.69 0.5" stroke="#9a1c30" stroke-width="1.3"/><path d="M9.69 0V10.3M0 9.8H10.19" stroke="#777" stroke-width="1"/></svg>
<svg class="a" style="left:855.19px;top:162.5px;" width="10.19" height="10.3" viewBox="0 0 10.19 10.3"><rect width="10.19" height="10.3" fill="#fff"/><circle cx="5" cy="5.1" r="3.3" fill="none" stroke="#111" stroke-width="1.1"/><path d="M5 0V10.3M0 5.1H10.19" stroke="#111" stroke-width="1"/><path d="M9.69 0V10.3M0 9.8H10.19" stroke="#777" stroke-width="1"/></svg>
<div class="a " style="left:865.38px;top:162.5px;width:10.19px;height:10.3px;background:#ffffff;border-right:1px solid rgba(0,0,0,.45);border-bottom:1px solid rgba(0,0,0,.45)"></div>
<div class="a " style="left:875.57px;top:162.5px;width:10.19px;height:10.3px;background:#000000;border-right:1px solid rgba(0,0,0,.45);border-bottom:1px solid rgba(0,0,0,.45)"></div>
<div class="a " style="left:885.76px;top:162.5px;width:10.19px;height:10.3px;background:#ed1c24;border-right:1px solid rgba(0,0,0,.45);border-bottom:1px solid rgba(0,0,0,.45)"></div>
<div class="a " style="left:895.95px;top:162.5px;width:10.19px;height:10.3px;background:#fff200;border-right:1px solid rgba(0,0,0,.45);border-bottom:1px solid rgba(0,0,0,.45)"></div>
<div class="a " style="left:906.14px;top:162.5px;width:10.19px;height:10.3px;background:#00a651;border-right:1px solid rgba(0,0,0,.45);border-bottom:1px solid rgba(0,0,0,.45)"></div>
<div class="a " style="left:916.33px;top:162.5px;width:10.19px;height:10.3px;background:#00aeef;border-right:1px solid rgba(0,0,0,.45);border-bottom:1px solid rgba(0,0,0,.45)"></div>
<div class="a " style="left:926.52px;top:162.5px;width:10.19px;height:10.3px;background:#2e3192;border-right:1px solid rgba(0,0,0,.45);border-bottom:1px solid rgba(0,0,0,.45)"></div>
<div class="a " style="left:936.71px;top:162.5px;width:10.19px;height:10.3px;background:#ec008c;border-right:1px solid rgba(0,0,0,.45);border-bottom:1px solid rgba(0,0,0,.45)"></div>
<div class="a " style="left:946.9px;top:162.5px;width:10.19px;height:10.3px;background:#d4202f;border-right:1px solid rgba(0,0,0,.45);border-bottom:1px solid rgba(0,0,0,.45)"></div>
<div class="a " style="left:957.09px;top:162.5px;width:10.19px;height:10.3px;background:#ef4136;border-right:1px solid rgba(0,0,0,.45);border-bottom:1px solid rgba(0,0,0,.45)"></div>
<div class="a " style="left:967.28px;top:162.5px;width:10.19px;height:10.3px;background:#f15a29;border-right:1px solid rgba(0,0,0,.45);border-bottom:1px solid rgba(0,0,0,.45)"></div>
<div class="a " style="left:977.47px;top:162.5px;width:10.19px;height:10.3px;background:#f7941e;border-right:1px solid rgba(0,0,0,.45);border-bottom:1px solid rgba(0,0,0,.45)"></div>
<div class="a " style="left:845.0px;top:172.8px;width:10.19px;height:10.3px;background:#fbb040;border-right:1px solid rgba(0,0,0,.45);border-bottom:1px solid rgba(0,0,0,.45)"></div>
<div class="a " style="left:855.19px;top:172.8px;width:10.19px;height:10.3px;background:#f9ed32;border-right:1px solid rgba(0,0,0,.45);border-bottom:1px solid rgba(0,0,0,.45)"></div>
<div class="a " style="left:865.38px;top:172.8px;width:10.19px;height:10.3px;background:#d7df23;border-right:1px solid rgba(0,0,0,.45);border-bottom:1px solid rgba(0,0,0,.45)"></div>
<div class="a " style="left:875.57px;top:172.8px;width:10.19px;height:10.3px;background:#8dc63f;border-right:1px solid rgba(0,0,0,.45);border-bottom:1px solid rgba(0,0,0,.45)"></div>
<div class="a " style="left:885.76px;top:172.8px;width:10.19px;height:10.3px;background:#39b54a;border-right:1px solid rgba(0,0,0,.45);border-bottom:1px solid rgba(0,0,0,.45)"></div>
<div class="a " style="left:895.95px;top:172.8px;width:10.19px;height:10.3px;background:#009444;border-right:1px solid rgba(0,0,0,.45);border-bottom:1px solid rgba(0,0,0,.45)"></div>
<div class="a " style="left:906.14px;top:172.8px;width:10.19px;height:10.3px;background:#006838;border-right:1px solid rgba(0,0,0,.45);border-bottom:1px solid rgba(0,0,0,.45)"></div>
<div class="a " style="left:916.33px;top:172.8px;width:10.19px;height:10.3px;background:#2bb673;border-right:1px solid rgba(0,0,0,.45);border-bottom:1px solid rgba(0,0,0,.45)"></div>
<div class="a " style="left:926.52px;top:172.8px;width:10.19px;height:10.3px;background:#00a79d;border-right:1px solid rgba(0,0,0,.45);border-bottom:1px solid rgba(0,0,0,.45)"></div>
<div class="a " style="left:936.71px;top:172.8px;width:10.19px;height:10.3px;background:#27aae1;border-right:1px solid rgba(0,0,0,.45);border-bottom:1px solid rgba(0,0,0,.45)"></div>
<div class="a " style="left:946.9px;top:172.8px;width:10.19px;height:10.3px;background:#1c75bc;border-right:1px solid rgba(0,0,0,.45);border-bottom:1px solid rgba(0,0,0,.45)"></div>
<div class="a " style="left:957.09px;top:172.8px;width:10.19px;height:10.3px;background:#2b3990;border-right:1px solid rgba(0,0,0,.45);border-bottom:1px solid rgba(0,0,0,.45)"></div>
<div class="a " style="left:967.28px;top:172.8px;width:10.19px;height:10.3px;background:#262262;border-right:1px solid rgba(0,0,0,.45);border-bottom:1px solid rgba(0,0,0,.45)"></div>
<div class="a " style="left:977.47px;top:172.8px;width:10.19px;height:10.3px;background:#662d91;border-right:1px solid rgba(0,0,0,.45);border-bottom:1px solid rgba(0,0,0,.45)"></div>
<div class="a " style="left:845.0px;top:183.1px;width:10.19px;height:10.3px;background:#92278f;border-right:1px solid rgba(0,0,0,.45);border-bottom:1px solid rgba(0,0,0,.45)"></div>
<div class="a " style="left:855.19px;top:183.1px;width:10.19px;height:10.3px;background:#9e1f63;border-right:1px solid rgba(0,0,0,.45);border-bottom:1px solid rgba(0,0,0,.45)"></div>
<div class="a " style="left:865.38px;top:183.1px;width:10.19px;height:10.3px;background:#da1c5c;border-right:1px solid rgba(0,0,0,.45);border-bottom:1px solid rgba(0,0,0,.45)"></div>
<div class="a " style="left:875.57px;top:183.1px;width:10.19px;height:10.3px;background:#ee2a7b;border-right:1px solid rgba(0,0,0,.45);border-bottom:1px solid rgba(0,0,0,.45)"></div>
<div class="a " style="left:885.76px;top:183.1px;width:10.19px;height:10.3px;background:#c2b59b;border-right:1px solid rgba(0,0,0,.45);border-bottom:1px solid rgba(0,0,0,.45)"></div>
<div class="a " style="left:895.95px;top:183.1px;width:10.19px;height:10.3px;background:#9b8579;border-right:1px solid rgba(0,0,0,.45);border-bottom:1px solid rgba(0,0,0,.45)"></div>
<div class="a " style="left:906.14px;top:183.1px;width:10.19px;height:10.3px;background:#726658;border-right:1px solid rgba(0,0,0,.45);border-bottom:1px solid rgba(0,0,0,.45)"></div>
<div class="a " style="left:916.33px;top:183.1px;width:10.19px;height:10.3px;background:#594a42;border-right:1px solid rgba(0,0,0,.45);border-bottom:1px solid rgba(0,0,0,.45)"></div>
<div class="a " style="left:926.52px;top:183.1px;width:10.19px;height:10.3px;background:#c49a6c;border-right:1px solid rgba(0,0,0,.45);border-bottom:1px solid rgba(0,0,0,.45)"></div>
<div class="a " style="left:936.71px;top:183.1px;width:10.19px;height:10.3px;background:#a97c50;border-right:1px solid rgba(0,0,0,.45);border-bottom:1px solid rgba(0,0,0,.45)"></div>
<div class="a " style="left:946.9px;top:183.1px;width:10.19px;height:10.3px;background:#8b5e3c;border-right:1px solid rgba(0,0,0,.45);border-bottom:1px solid rgba(0,0,0,.45)"></div>
<div class="a " style="left:957.09px;top:183.1px;width:10.19px;height:10.3px;background:#754c29;border-right:1px solid rgba(0,0,0,.45);border-bottom:1px solid rgba(0,0,0,.45)"></div>
<div class="a " style="left:967.28px;top:183.1px;width:10.19px;height:10.3px;background:#603913;border-right:1px solid rgba(0,0,0,.45);border-bottom:1px solid rgba(0,0,0,.45)"></div>
<div class="a " style="left:977.47px;top:183.1px;width:10.19px;height:10.3px;background:#3c2415;border-right:1px solid rgba(0,0,0,.45);border-bottom:1px solid rgba(0,0,0,.45)"></div>
<div class="a " style="left:845px;top:193.4px;width:10.19px;height:10.3px;background:linear-gradient(135deg,#fff,#9a9a9a 60%,#555);border-right:1px solid #555;border-bottom:1px solid #555"></div>
<div class="a " style="left:855.19px;top:193.4px;width:10.19px;height:10.3px;background:radial-gradient(circle,#fff 35%,#111 75%);border-right:1px solid #555"></div>
<div class="a " style="left:865.38px;top:193.4px;width:10.19px;height:10.3px;background:linear-gradient(90deg,#f7941e,#fff200 30%,#f7941e 50%,#fff200 70%,#f7941e);border-right:1px solid #555"></div>
<div class="a " style="left:875.57px;top:193.4px;width:10.19px;height:10.3px;background:radial-gradient(circle,#fff 38%,#662d91 72%);border-right:1px solid #555"></div>
<div class="a " style="left:885.76px;top:193.4px;width:10.19px;height:10.3px;background:repeating-linear-gradient(135deg,#d4145a 0 1.4px,#f9d6e3 1.4px 3px);border-right:1px solid #777"></div>
<svg class="a" style="left:845px;top:203.7px;" width="10.19" height="10.3" viewBox="0 0 10.19 10.3"><path d="M1.5 3.2H4.2L5 4.2H8.8V8.6H1.5Z" fill="#f6f6f6" stroke="#888" stroke-width="0.8"/></svg>
<div class="a " style="left:853.8900000000001px;top:203.39999999999998px;width:113.68999999999998px;height:11.100000000000001px;background:#fff"></div>
<div class="a " style="left:854.69px;top:204.29999999999998px;width:10.19px;height:9.3px;background:#000000;border-right:1px solid rgba(255,255,255,.35)"></div>
<div class="a " style="left:864.8800000000001px;top:204.29999999999998px;width:10.19px;height:9.3px;background:#3b424c;border-right:1px solid rgba(255,255,255,.35)"></div>
<div class="a " style="left:875.07px;top:204.29999999999998px;width:10.19px;height:9.3px;background:#565656;border-right:1px solid rgba(255,255,255,.35)"></div>
<div class="a " style="left:885.2600000000001px;top:204.29999999999998px;width:10.19px;height:9.3px;background:#6e6e6e;border-right:1px solid rgba(255,255,255,.35)"></div>
<div class="a " style="left:895.45px;top:204.29999999999998px;width:10.19px;height:9.3px;background:#858585;border-right:1px solid rgba(255,255,255,.35)"></div>
<div class="a " style="left:905.6400000000001px;top:204.29999999999998px;width:10.19px;height:9.3px;background:#999999;border-right:1px solid rgba(255,255,255,.35)"></div>
<div class="a " style="left:915.83px;top:204.29999999999998px;width:10.19px;height:9.3px;background:#adadad;border-right:1px solid rgba(255,255,255,.35)"></div>
<div class="a " style="left:926.0200000000001px;top:204.29999999999998px;width:10.19px;height:9.3px;background:#c0c0c0;border-right:1px solid rgba(255,255,255,.35)"></div>
<div class="a " style="left:936.21px;top:204.29999999999998px;width:10.19px;height:9.3px;background:#d2d2d2;border-right:1px solid rgba(255,255,255,.35)"></div>
<div class="a " style="left:946.4000000000001px;top:204.29999999999998px;width:10.19px;height:9.3px;background:#e4e4e4;border-right:1px solid rgba(255,255,255,.35)"></div>
<div class="a " style="left:956.59px;top:204.29999999999998px;width:10.19px;height:9.3px;background:#f4f4f4;border-right:1px solid rgba(255,255,255,.35)"></div>
<svg class="a" style="left:845px;top:214.0px;" width="10.19" height="10.3" viewBox="0 0 10.19 10.3"><path d="M1.5 3.2H4.2L5 4.2H8.8V8.6H1.5Z" fill="#f6f6f6" stroke="#888" stroke-width="0.8"/></svg>
<div class="a " style="left:854.69px;top:214.5px;width:10.19px;height:9.8px;background:#ed1c24;border-right:1px solid rgba(255,255,255,.5);border-bottom:1px solid rgba(0,0,0,.4)"></div>
<div class="a " style="left:864.8800000000001px;top:214.5px;width:10.19px;height:9.8px;background:#f26522;border-right:1px solid rgba(255,255,255,.5);border-bottom:1px solid rgba(0,0,0,.4)"></div>
<div class="a " style="left:875.07px;top:214.5px;width:10.19px;height:9.8px;background:#ffde17;border-right:1px solid rgba(255,255,255,.5);border-bottom:1px solid rgba(0,0,0,.4)"></div>
<div class="a " style="left:885.2600000000001px;top:214.5px;width:10.19px;height:9.8px;background:#00a651;border-right:1px solid rgba(255,255,255,.5);border-bottom:1px solid rgba(0,0,0,.4)"></div>
<div class="a " style="left:895.45px;top:214.5px;width:10.19px;height:9.8px;background:#21409a;border-right:1px solid rgba(255,255,255,.5);border-bottom:1px solid rgba(0,0,0,.4)"></div>
<div class="a " style="left:905.6400000000001px;top:214.5px;width:10.19px;height:9.8px;background:#7f3f98;border-right:1px solid rgba(255,255,255,.5);border-bottom:1px solid rgba(0,0,0,.4)"></div>
<div class="a " style="left:845px;top:275px;width:143.5px;height:1px;background:#7a7a7a"></div>
<svg class="a" style="left:851.5px;top:276.5px;" width="11" height="9" viewBox="0 0 11 9"><rect x="0.5" y="0.5" width="7" height="5" fill="#eee" stroke="#555" stroke-width="0.8"/><rect x="2" y="2" width="7" height="5" fill="#ddd" stroke="#444" stroke-width="0.8"/><path d="M10.5 6V8.5H8Z" fill="#222"/></svg>
<svg class="a" style="left:880px;top:276.5px;" width="12" height="9" viewBox="0 0 12 9"><rect x="0.5" y="0.5" width="4" height="3.4" fill="#555"/><rect x="3" y="2.4" width="4" height="3.4" fill="#777" stroke="#333" stroke-width="0.6"/><rect x="5.6" y="4.4" width="3.6" height="3.6" fill="#444"/><path d="M12 6V8.5H9.6Z" fill="#222"/></svg>
<svg class="a" style="left:903.5px;top:276.5px;" width="10" height="9" viewBox="0 0 10 9"><rect x="0.6" y="0.6" width="8.8" height="7.6" fill="#e6e6e6" stroke="#333" stroke-width="1"/><path d="M0.6 3H9.4M3.4 3V8" stroke="#333" stroke-width="0.8"/></svg>
<svg class="a" style="left:925px;top:276px;" width="12" height="9" viewBox="0 0 12 9"><path d="M1.5 3.2H4.2L5 4.2H9V8.6H1.5Z" fill="#f6f6f6" stroke="#555" stroke-width="0.8"/><path d="M9.8 0V4M7.8 2H11.8" stroke="#333" stroke-width="0.9"/></svg>
<svg class="a" style="left:950.5px;top:277px;" width="8" height="8" viewBox="0 0 8 8"><path d="M0.6 2.6H5.4V7.4H0.6Z" fill="#f2f2f2" stroke="#333" stroke-width="0.9"/><path d="M2.6 0.6H7.4V5.4" fill="none" stroke="#333" stroke-width="0.9"/></svg>
<svg class="a" style="left:972.5px;top:276.5px;" width="8" height="9" viewBox="0 0 8 9"><path d="M1.2 3H6.8L6.2 8.5H1.8Z" fill="#bbb" stroke="#333" stroke-width="0.8"/><path d="M0.4 2.2H7.6M2.8 1H5.2" stroke="#333" stroke-width="0.9"/></svg>
<div class="a " style="left:844px;top:287.5px;width:157px;height:2.5px;background:#5c5c5c"></div>
<div class="a " style="left:844px;top:290px;width:157px;height:13px;background:linear-gradient(#8f8f8f,#777)"></div>
<svg class="a" style="left:988px;top:293.5px;" width="10" height="7" viewBox="0 0 10 7"><path d="M0 2H3.4L1.7 4.2Z" fill="#333"/><path d="M4.4 0.5H10M4.4 2.5H10M4.4 4.5H10M4.4 6.5H10" stroke="#555" stroke-width="0.9"/></svg>
<div class="a " style="left:844px;top:290px;width:34px;height:14px;background:#d6d6d6;border-top:1px solid #efefef;border-right:1px solid #7a7a7a"></div>
<svg class="a" style="left:847px;top:294px;" width="3.4" height="6" viewBox="0 0 3.4 6"><path d="M0 2.4L1.7 0.3L3.4 2.4ZM0 3.6L1.7 5.7L3.4 3.6Z" fill="#333"/></svg>
<div class="a t " style="left:852.5px;top:291px;font-size:9px">字符</div>
<div class="a " style="left:878px;top:290px;width:27.5px;height:13px;background:linear-gradient(#b1b1b1,#9c9c9c);border-right:1px solid #6e6e6e;border-top:1px solid #c4c4c4"></div>
<div class="a t " style="left:883px;top:291px;font-size:9px;color:#2a2a2a">段落</div>
<div class="a " style="left:905.5px;top:290px;width:55px;height:13px;background:linear-gradient(#b1b1b1,#9c9c9c);border-right:1px solid #6e6e6e;border-top:1px solid #c4c4c4"></div>
<div class="a t " style="left:910.5px;top:291px;font-size:9.5px;color:#2a2a2a">OpenType</div>
<div class="a " style="left:844px;top:303px;width:157px;height:192px;background:#d6d6d6"></div>
<div class="a " style="left:845px;top:434px;width:72px;height:16px;background:radial-gradient(ellipse at 30% 60%,rgba(255,255,255,.75),rgba(255,255,255,0) 70%)"></div>
<div class="a " style="left:845px;top:456px;width:38px;height:22px;background:radial-gradient(ellipse at 45% 55%,rgba(255,255,255,.8),rgba(255,255,255,0) 75%)"></div>
<div class="a " style="left:926px;top:456px;width:22px;height:20px;background:radial-gradient(ellipse at 45% 55%,rgba(255,255,255,.8),rgba(255,255,255,0) 75%)"></div>
<div class="a " style="left:845px;top:479px;width:42px;height:15px;background:linear-gradient(90deg,rgba(255,255,255,.55),rgba(255,255,255,.9))"></div>
<div class="a " style="left:883px;top:458px;width:45px;height:10px;background:linear-gradient(rgba(255,255,255,.35),rgba(255,255,255,0))"></div>
<div class="a " style="left:848px;top:309px;width:146px;height:12.3px;background:#fff"></div>
<div class="a t " style="left:851px;top:309.15px;font-size:9px">Adobe 宋体 Std L</div>
<svg class="a" style="left:985.5px;top:314.15px;" width="5.5" height="3.2" viewBox="0 0 5.5 3.2"><path d="M0 0H5.5L2.75 3.2Z" fill="#111"/></svg>
<div class="a " style="left:848px;top:325px;width:146px;height:12.3px;background:#fff"></div>
<div class="a t " style="left:851px;top:325.15px;font-size:9px">-</div>
<svg class="a" style="left:985.5px;top:330.15px;" width="5.5" height="3.2" viewBox="0 0 5.5 3.2"><path d="M0 0H5.5L2.75 3.2Z" fill="#111"/></svg>
<div class="a " style="left:847px;top:341px;width:148px;height:1px;background:#b4b4b4"></div>
<div class="a " style="left:847px;top:342px;width:148px;height:1px;background:#e8e8e8"></div>
<div class="a " style="left:865px;top:346.2px;width:53px;height:11.8px;background:#fff"></div>
<div class="a " style="left:865px;top:346.2px;width:9.5px;height:11.8px;background:#eef0f4"></div>
<svg class="a" style="left:868px;top:348.0px;" width="3.6" height="8.200000000000001" viewBox="0 0 3.6 8.200000000000001"><path d="M0 3L1.8 0.4L3.6 3ZM0 5.200000000000001L1.8 7.800000000000001L3.6 5.200000000000001Z" fill="#7f89a6"/></svg>
<div class="a t " style="left:878px;top:346.09999999999997px;font-size:7.5px">12 pt</div>
<svg class="a" style="left:909.5px;top:351.09999999999997px;" width="5.5" height="3.2" viewBox="0 0 5.5 3.2"><path d="M0 0H5.5L2.75 3.2Z" fill="#111"/></svg>
<div class="a " style="left:939.5px;top:346.2px;width:53px;height:11.8px;background:#fff"></div>
<div class="a " style="left:939.5px;top:346.2px;width:9.5px;height:11.8px;background:#eef0f4"></div>
<svg class="a" style="left:942.5px;top:348.0px;" width="3.6" height="8.200000000000001" viewBox="0 0 3.6 8.200000000000001"><path d="M0 3L1.8 0.4L3.6 3ZM0 5.200000000000001L1.8 7.800000000000001L3.6 5.200000000000001Z" fill="#7f89a6"/></svg>
<div class="a t " style="left:952.5px;top:346.09999999999997px;font-size:7.5px">(14.4 pt)</div>
<svg class="a" style="left:984.0px;top:351.09999999999997px;" width="5.5" height="3.2" viewBox="0 0 5.5 3.2"><path d="M0 0H5.5L2.75 3.2Z" fill="#111"/></svg>
<div class="a " style="left:865px;top:362px;width:53px;height:12px;background:#fff"></div>
<div class="a " style="left:865px;top:362px;width:9.5px;height:12px;background:#eef0f4"></div>
<svg class="a" style="left:868px;top:363.8px;" width="3.6" height="8.4" viewBox="0 0 3.6 8.4"><path d="M0 3L1.8 0.4L3.6 3ZM0 5.4L1.8 8L3.6 5.4Z" fill="#7f89a6"/></svg>
<div class="a t " style="left:878px;top:362.0px;font-size:7.5px">100%</div>
<svg class="a" style="left:909.5px;top:367.0px;" width="5.5" height="3.2" viewBox="0 0 5.5 3.2"><path d="M0 0H5.5L2.75 3.2Z" fill="#111"/></svg>
<div class="a " style="left:939.5px;top:362px;width:53px;height:12px;background:#fff"></div>
<div class="a " style="left:939.5px;top:362px;width:9.5px;height:12px;background:#eef0f4"></div>
<svg class="a" style="left:942.5px;top:363.8px;" width="3.6" height="8.4" viewBox="0 0 3.6 8.4"><path d="M0 3L1.8 0.4L3.6 3ZM0 5.4L1.8 8L3.6 5.4Z" fill="#7f89a6"/></svg>
<div class="a t " style="left:952.5px;top:362.0px;font-size:7.5px">100%</div>
<svg class="a" style="left:984.0px;top:367.0px;" width="5.5" height="3.2" viewBox="0 0 5.5 3.2"><path d="M0 0H5.5L2.75 3.2Z" fill="#111"/></svg>
<div class="a " style="left:847px;top:378px;width:148px;height:1px;background:#b4b4b4"></div>
<div class="a " style="left:847px;top:379px;width:148px;height:1px;background:#e8e8e8"></div>
<div class="a " style="left:865px;top:383.6px;width:53px;height:12.2px;background:#fff"></div>
<div class="a " style="left:865px;top:383.6px;width:9.5px;height:12.2px;background:#eef0f4"></div>
<svg class="a" style="left:868px;top:385.40000000000003px;" width="3.6" height="8.6" viewBox="0 0 3.6 8.6"><path d="M0 3L1.8 0.4L3.6 3ZM0 5.6L1.8 8.2L3.6 5.6Z" fill="#7f89a6"/></svg>
<div class="a t " style="left:878px;top:383.70000000000005px;font-size:8.7px">自动</div>
<svg class="a" style="left:909.5px;top:388.70000000000005px;" width="5.5" height="3.2" viewBox="0 0 5.5 3.2"><path d="M0 0H5.5L2.75 3.2Z" fill="#111"/></svg>
<div class="a " style="left:939.5px;top:383px;width:53px;height:12.2px;background:#fff"></div>
<div class="a " style="left:939.5px;top:383px;width:9.5px;height:12.2px;background:#eef0f4"></div>
<svg class="a" style="left:942.5px;top:384.8px;" width="3.6" height="8.6" viewBox="0 0 3.6 8.6"><path d="M0 3L1.8 0.4L3.6 3ZM0 5.6L1.8 8.2L3.6 5.6Z" fill="#7f89a6"/></svg>
<div class="a t " style="left:952.5px;top:383.1px;font-size:7.5px">0</div>
<svg class="a" style="left:984.0px;top:388.1px;" width="5.5" height="3.2" viewBox="0 0 5.5 3.2"><path d="M0 0H5.5L2.75 3.2Z" fill="#111"/></svg>
<div class="a " style="left:865px;top:399px;width:53px;height:12.2px;background:#fff"></div>
<div class="a " style="left:865px;top:399px;width:9.5px;height:12.2px;background:#eef0f4"></div>
<svg class="a" style="left:868px;top:400.8px;" width="3.6" height="8.6" viewBox="0 0 3.6 8.6"><path d="M0 3L1.8 0.4L3.6 3ZM0 5.6L1.8 8.2L3.6 5.6Z" fill="#7f89a6"/></svg>
<div class="a t " style="left:878px;top:399.1px;font-size:7.5px">0%</div>
<svg class="a" style="left:909.5px;top:404.1px;" width="5.5" height="3.2" viewBox="0 0 5.5 3.2"><path d="M0 0H5.5L2.75 3.2Z" fill="#111"/></svg>
<div class="a " style="left:865px;top:416px;width:53px;height:11.6px;background:#fff"></div>
<div class="a t " style="left:867.5px;top:415.8px;font-size:9px">自动</div>
<svg class="a" style="left:909.5px;top:420.8px;" width="5.5" height="3.2" viewBox="0 0 5.5 3.2"><path d="M0 0H5.5L2.75 3.2Z" fill="#111"/></svg>
<div class="a " style="left:903.5px;top:416px;width:4px;height:11.6px;background:#e2e2e2"></div>
<div class="a " style="left:939.5px;top:416px;width:53px;height:11.6px;background:#fff"></div>
<div class="a t " style="left:942px;top:415.8px;font-size:9px">自动</div>
<svg class="a" style="left:984.0px;top:420.8px;" width="5.5" height="3.2" viewBox="0 0 5.5 3.2"><path d="M0 0H5.5L2.75 3.2Z" fill="#111"/></svg>
<div class="a " style="left:979px;top:416px;width:4px;height:11.6px;background:#e2e2e2"></div>
<div class="a " style="left:847px;top:432px;width:148px;height:1px;background:#b4b4b4"></div>
<div class="a " style="left:847px;top:433px;width:148px;height:1px;background:#e8e8e8"></div>
<div class="a " style="left:865px;top:437px;width:53px;height:11.8px;background:#fff"></div>
<div class="a " style="left:865px;top:437px;width:9.5px;height:11.8px;background:#eef0f4"></div>
<svg class="a" style="left:868px;top:438.8px;" width="3.6" height="8.200000000000001" viewBox="0 0 3.6 8.200000000000001"><path d="M0 3L1.8 0.4L3.6 3ZM0 5.200000000000001L1.8 7.800000000000001L3.6 5.200000000000001Z" fill="#7f89a6"/></svg>
<div class="a t " style="left:878px;top:436.9px;font-size:7.5px">0 pt</div>
<svg class="a" style="left:909.5px;top:441.9px;" width="5.5" height="3.2" viewBox="0 0 5.5 3.2"><path d="M0 0H5.5L2.75 3.2Z" fill="#111"/></svg>
<div class="a " style="left:939.5px;top:437px;width:53px;height:11.8px;background:#fff"></div>
<div class="a " style="left:939.5px;top:437px;width:9.5px;height:11.8px;background:#eef0f4"></div>
<svg class="a" style="left:942.5px;top:438.8px;" width="3.6" height="8.200000000000001" viewBox="0 0 3.6 8.200000000000001"><path d="M0 3L1.8 0.4L3.6 3ZM0 5.200000000000001L1.8 7.800000000000001L3.6 5.200000000000001Z" fill="#7f89a6"/></svg>
<div class="a t " style="left:952.5px;top:436.9px;font-size:7.5px">0°</div>
<svg class="a" style="left:984.0px;top:441.9px;" width="5.5" height="3.2" viewBox="0 0 5.5 3.2"><path d="M0 0H5.5L2.75 3.2Z" fill="#111"/></svg>
<div class="a " style="left:847px;top:453px;width:148px;height:1px;background:#b4b4b4"></div>
<div class="a " style="left:847px;top:454px;width:148px;height:1px;background:#e8e8e8"></div>
<div class="a " style="left:928.5px;top:459.2px;width:64px;height:12.4px;background:#fff"></div>
<div class="a t " style="left:944px;top:459.4px;font-size:9px">锐化</div>
<svg class="a" style="left:984.0px;top:464.4px;" width="5.5" height="3.2" viewBox="0 0 5.5 3.2"><path d="M0 0H5.5L2.75 3.2Z" fill="#111"/></svg>
<div class="a " style="left:979px;top:459.2px;width:4px;height:12.4px;background:#e2e2e2"></div>
<div class="a " style="left:847px;top:475.5px;width:148px;height:1px;background:#b4b4b4"></div>
<div class="a " style="left:847px;top:476.5px;width:148px;height:1px;background:#e8e8e8"></div>
<div class="a " style="left:886px;top:480px;width:73px;height:12.5px;background:#fff"></div>
<div class="a t " style="left:864px;top:480.2px;font-size:9.5px;letter-spacing:-0.2px">语言: 英语: 美国</div>
<svg class="a" style="left:950px;top:485px;" width="5.5" height="3.2" viewBox="0 0 5.5 3.2"><path d="M0 0H5.5L2.75 3.2Z" fill="#111"/></svg>
<div class="a" style="left:850.5px;top:349.5px;font-family:'Liberation Serif',serif;font-weight:bold;font-size:7.5px;line-height:7.5px;color:#222;color:#777">T</div>
<div class="a" style="left:853.5px;top:345.5px;font-family:'Liberation Serif',serif;font-weight:bold;font-size:12.5px;line-height:12.5px;color:#222;-webkit-text-stroke:0.4px #222">T</div>
<div class="a" style="left:851.5px;top:361px;font-family:'Liberation Serif',serif;font-weight:bold;font-size:12.5px;line-height:12.5px;color:#222;-webkit-text-stroke:0.4px #222">T</div>
<svg class="a" style="left:851px;top:372.5px;" width="11" height="3" viewBox="0 0 11 3"><path d="M0 1.5H11" stroke="#222" stroke-width="0.9"/><path d="M0 0V3M11 0V3" stroke="#222" stroke-width="0.9"/></svg>
<div class="a" style="left:929px;top:345px;font-size:6.5px;font-weight:bold;line-height:6px;color:#222;text-align:center;width:7px">A<br>A</div>
<svg class="a" style="left:927px;top:351px;" width="3" height="7" viewBox="0 0 3 7"><path d="M1.5 0V7" stroke="#222" stroke-width="0.8"/><path d="M0 1.4L1.5 0L3 1.4M0 5.6L1.5 7L3 5.6" fill="none" stroke="#222" stroke-width="0.7"/></svg>
<svg class="a" style="left:925.5px;top:362.5px;" width="3" height="11" viewBox="0 0 3 11"><path d="M1.5 0V11" stroke="#222" stroke-width="0.8"/><path d="M0 1.6L1.5 0L3 1.6M0 9.4L1.5 11L3 9.4" fill="none" stroke="#222" stroke-width="0.7"/></svg>
<div class="a" style="left:929px;top:361px;font-family:'Liberation Serif',serif;font-weight:bold;font-size:13px;line-height:13px;color:#222;font-weight:normal">T</div>
<div class="a" style="left:851px;top:385px;font-size:7.5px;line-height:8px;color:#222;letter-spacing:-1px">AV</div>
<svg class="a" style="left:855px;top:382.5px;" width="3" height="3" viewBox="0 0 3 3"><path d="M0 0H3L1.5 2.4Z" fill="#222"/></svg>
<svg class="a" style="left:853px;top:393.5px;" width="7" height="2" viewBox="0 0 7 2"><path d="M0 1H7" stroke="#222" stroke-width="0.8"/></svg>
<div class="a" style="left:925.5px;top:383.5px;width:12px;height:8px;color:#222;font-size:7.5px;font-weight:bold;line-height:8px;text-align:center;letter-spacing:-0.3px;border-bottom:1px solid #444">AV</div>
<svg class="a" style="left:926px;top:392.5px;" width="11" height="3" viewBox="0 0 11 3"><path d="M0 1.5H11" stroke="#222" stroke-width="0.9"/><path d="M0 0V3M11 0V3" stroke="#222" stroke-width="0.9"/></svg>
<div class="a" style="left:852px;top:400px;width:8px;height:8px;font-size:7px;line-height:8px;color:#222;border-left:1px dotted #444;border-right:1px dotted #444;text-align:center">あ</div>
<svg class="a" style="left:851px;top:409.5px;" width="10" height="2.5" viewBox="0 0 10 2.5"><path d="M0 1.2H10" stroke="#222" stroke-width="0.8"/><path d="M1.6 0L0 1.2L1.6 2.5M8.4 0L10 1.2L8.4 2.5" fill="none" stroke="#222" stroke-width="0.7"/></svg>
<div class="a" style="left:854px;top:416.5px;width:8px;height:8px;font-size:7px;line-height:8px;color:#222;border-left:1px dotted #444;border-right:1px dotted #444;text-align:center">あ</div>
<svg class="a" style="left:850px;top:418px;" width="3" height="9" viewBox="0 0 3 9"><path d="M1.5 0V8H4" stroke="#222" stroke-width="0.8" fill="none"/></svg>
<div class="a" style="left:926px;top:416.5px;width:8px;height:8px;font-size:7px;line-height:8px;color:#222;border-left:1px dotted #444;border-right:1px dotted #444;text-align:center">あ</div>
<svg class="a" style="left:934px;top:420px;" width="4" height="7" viewBox="0 0 4 7"><path d="M2.5 0V6H0" stroke="#222" stroke-width="0.8" fill="none"/></svg>
<div class="a" style="left:851px;top:438px;font-size:8px;font-weight:bold;line-height:9px;color:#444">A</div>
<svg class="a" style="left:857px;top:438px;" width="3" height="10" viewBox="0 0 3 10"><path d="M1.5 0V10" stroke="#333" stroke-width="0.8"/><path d="M0 1.6L1.5 0L3 1.6M0 8.4L1.5 10L3 8.4" fill="none" stroke="#333" stroke-width="0.7"/></svg>
<svg class="a" style="left:926px;top:437.5px;" width="11" height="11" viewBox="0 0 11 11"><circle cx="5.5" cy="5.5" r="4.6" fill="none" stroke="#222" stroke-width="0.9" stroke-dasharray="5 1.2"/><text x="5.5" y="8.4" font-family="Liberation Serif,serif" font-weight="bold" font-size="8" text-anchor="middle" fill="#222">T</text></svg>
<div class="a" style="left:871px;top:459px;font-size:7px;line-height:8px;color:#333">ªa</div>
<div class="a " style="left:846px;top:436px;width:30px;height:13px;background:radial-gradient(ellipse at 40% 50%,rgba(255,255,255,.7),rgba(255,255,255,0) 75%)"></div>
<div class="a " style="left:846px;top:457px;width:36px;height:19px;background:radial-gradient(ellipse at 40% 55%,rgba(255,255,255,.75),rgba(255,255,255,0) 75%)"></div>
<div class="a " style="left:926px;top:457px;width:18px;height:18px;background:radial-gradient(ellipse at 50% 55%,rgba(255,255,255,.7),rgba(255,255,255,0) 75%)"></div>
<div class="a " style="left:844px;top:495px;width:157px;height:1.5px;background:#3a3a3a"></div>
<div class="a " style="left:844px;top:496.5px;width:157px;height:14.5px;background:linear-gradient(#8f8f8f,#777)"></div>
<svg class="a" style="left:988px;top:501px;" width="10" height="7" viewBox="0 0 10 7"><path d="M0 2H3.4L1.7 4.2Z" fill="#333"/><path d="M4.4 0.5H10M4.4 2.5H10M4.4 4.5H10M4.4 6.5H10" stroke="#555" stroke-width="0.9"/></svg>
<div class="a " style="left:844px;top:506px;width:43px;height:5.5px;background:#d6d6d6;overflow:hidden"><div class="a t" style="left:5px;top:-6px;font-size:9px;color:#222">字符样式</div></div>
<div class="a " style="left:887.5px;top:506px;width:49px;height:5.5px;background:linear-gradient(#a6a6a6,#9a9a9a);border-right:1px solid #6e6e6e;overflow:hidden"><div class="a t" style="left:5px;top:-6px;font-size:9px;color:#2a2a2a">段落样式</div></div>
<div class="a " style="left:844px;top:511.5px;width:157px;height:1.5px;background:#c8c8c8"></div>
<div class="a " style="left:844px;top:513px;width:157px;height:3px;background:#3e3e3e"></div>
<div class="a " style="left:844px;top:516px;width:157px;height:15px;background:linear-gradient(#8f8f8f,#777)"></div>
<div class="a " style="left:844px;top:516px;width:24px;height:15px;background:linear-gradient(#a8a8a8,#bcbcbc);border-top:1px solid #c8c8c8"></div>
<div class="a t " style="left:847.5px;top:518.3px;font-size:9.5px;color:#222">图层</div>
<div class="a " style="left:868px;top:517px;width:136px;height:15.6px;background:#fdfdfd"></div>
<svg class="a" style="left:866.5px;top:514.6px;" width="24" height="19" viewBox="0 0 24 19"><path d="M1.6 2.8L21.8 0.6L23 15.6L3.2 18.4Z" fill="#f05a1e" stroke="#fff" stroke-width="0.9"/><text x="12" y="14" font-family="Liberation Sans,sans-serif" font-weight="bold" font-style="italic" font-size="15" text-anchor="middle" fill="#fff">S</text></svg>
<div class="a t " style="left:893px;top:519px;font-size:11px;font-weight:bold;color:#2b78c2;height:13px;line-height:13px">英</div>
<svg class="a" style="left:911px;top:519px;" width="12" height="12" viewBox="0 0 12 12"><path d="M8 0.4C11.4 2.6 11.8 8.2 7.6 10.8C5 12.2 2 11.6 0.4 9.6C3.4 9.8 5.6 8.4 6.6 6C7.4 4 7.6 2 8 0.4Z" fill="#2b78c2"/></svg>
<svg class="a" style="left:927px;top:521px;" width="8" height="9" viewBox="0 0 8 9"><circle cx="1.8" cy="1.8" r="1.3" fill="#2b78c2"/><path d="M5.2 4.2C6.6 4.2 7 6 6 7C5.4 7.6 4.6 7.8 4.4 7.6C5 7 5.2 6.4 4.6 5.8C4.2 5.2 4.4 4.2 5.2 4.2Z" fill="#2b78c2"/></svg>
<svg class="a" style="left:941px;top:520px;" width="13" height="10" viewBox="0 0 13 10"><rect x="0.6" y="0.6" width="11.8" height="8.8" rx="1.2" fill="#2b78c2"/><path d="M2.2 2.8H10.8M2.2 4.8H10.8" stroke="#fff" stroke-width="1" stroke-dasharray="1.3 0.9"/><path d="M3.6 7H9.4" stroke="#fff" stroke-width="1"/></svg>
<svg class="a" style="left:959px;top:518.5px;" width="11" height="13" viewBox="0 0 11 13"><circle cx="4.6" cy="3" r="2.4" fill="#b9c6d4"/><path d="M0.6 11.4C0.6 7.6 2.4 6 4.6 6C6.8 6 8.6 7.6 8.6 11.4Z" fill="#b9c6d4"/><rect x="5.4" y="7.2" width="4.6" height="4.8" fill="#fff" stroke="#b0b8c4" stroke-width="0.7"/></svg>
<svg class="a" style="left:974px;top:519.5px;" width="12" height="11" viewBox="0 0 12 11"><path d="M3.6 0.6L0.4 2.6L1.8 5L3 4.4V10.4H9V4.4L10.2 5L11.6 2.6L8.4 0.6C7.6 2 4.4 2 3.6 0.6Z" fill="#2b78c2"/></svg>
<svg class="a" style="left:989px;top:519px;" width="12" height="12" viewBox="0 0 12 12"><path d="M10.6 1.2C9 0.2 6.8 0.8 6.2 2.6C5.9 3.5 6 4.3 6.3 5L0.9 10.2C0.3 10.8 1.5 12 2.1 11.4L7.4 6.2C9 6.8 10.8 6 11.4 4.4C11.6 3.8 11.6 3.2 11.4 2.6L9.6 4.4L8 4L7.6 2.6Z" fill="#2b78c2"/></svg>
</div>
</body>
</html>
